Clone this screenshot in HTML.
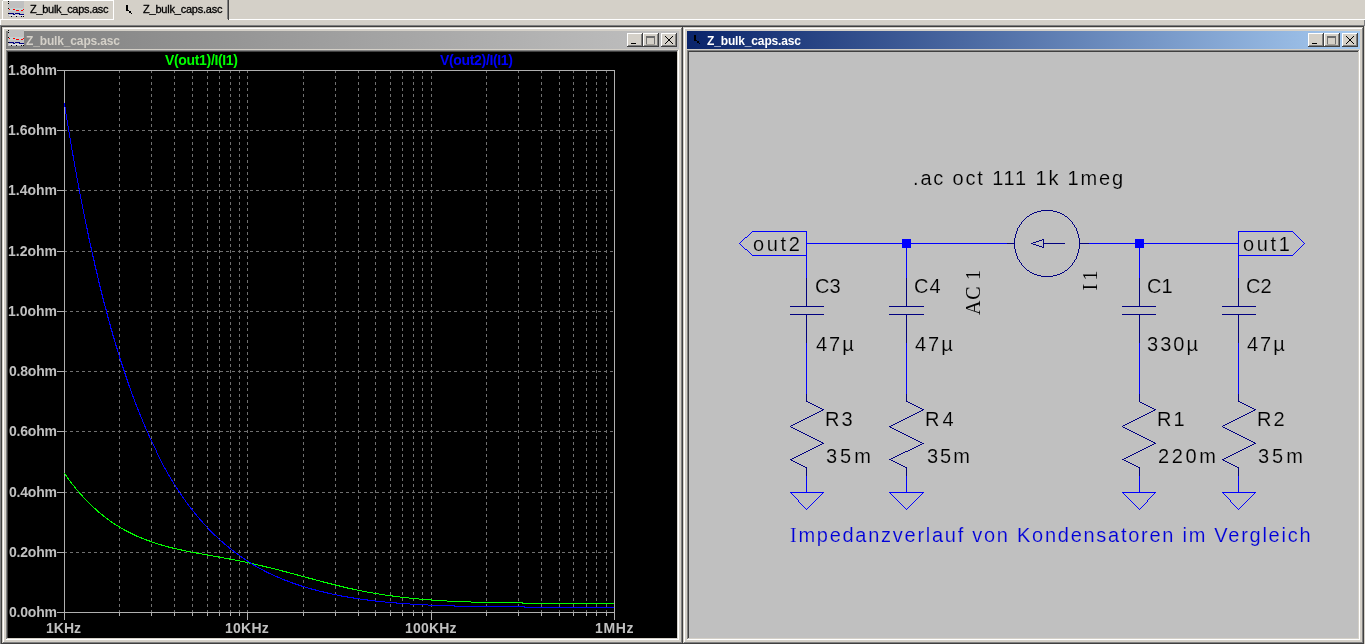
<!DOCTYPE html>
<html><head><meta charset="utf-8"><style>html,body{margin:0;padding:0;overflow:hidden;background:#d4d0c8}svg{display:block}</style></head>
<body><svg style="will-change:transform" width="1365" height="644" viewBox="0 0 1365 644" shape-rendering="crispEdges">
<rect x="0" y="0" width="1365" height="644" fill="#d4d0c8"/>
<rect x="3" y="0" width="111" height="1" fill="#ffffff"/>
<rect x="2" y="1" width="1" height="19" fill="#ffffff"/>
<rect x="113" y="0" width="1" height="20" fill="#ffffff"/>
<rect x="0" y="19" width="114" height="1" fill="#ffffff"/>
<rect x="0" y="19" width="1" height="6" fill="#ffffff"/>
<rect x="227" y="0" width="1" height="19" fill="#808080"/>
<rect x="228" y="0" width="1" height="20" fill="#404040"/>
<rect x="229" y="19" width="1136" height="1" fill="#ffffff"/>
<rect x="1364" y="20" width="1" height="5" fill="#808080"/>
<rect x="0" y="25" width="1365" height="1" fill="#808080"/>
<rect x="1" y="26" width="1363" height="1" fill="#404040"/>
<rect x="0" y="25" width="1" height="619" fill="#808080"/>
<rect x="1" y="26" width="1" height="618" fill="#404040"/>
<rect x="8" y="1" width="16" height="16" fill="#c0c0c0"/>
<rect x="9" y="8" width="15" height="3" fill="#c4d0d0"/>
<rect x="9" y="15" width="15" height="1" fill="#e4e4e4"/>
<rect x="8" y="1" width="1" height="1" fill="#000"/>
<rect x="8" y="3" width="1" height="1" fill="#000"/>
<rect x="8" y="8" width="1" height="1" fill="#000"/>
<rect x="8" y="13" width="1" height="1" fill="#000"/>
<rect x="11" y="16" width="1" height="1" fill="#000"/>
<rect x="16" y="16" width="1" height="1" fill="#000"/>
<rect x="21" y="16" width="1" height="1" fill="#000"/>
<rect x="23" y="16" width="1" height="1" fill="#000"/>
<rect x="9" y="9" width="1" height="1" fill="#ff0000"/>
<rect x="13" y="9" width="2" height="1" fill="#ff0000"/>
<rect x="23" y="9" width="1" height="1" fill="#ff0000"/>
<rect x="16" y="10" width="3" height="1" fill="#ff0000"/>
<rect x="21" y="10" width="2" height="1" fill="#ff0000"/>
<rect x="9" y="13" width="5" height="1" fill="#000080"/>
<rect x="15" y="13" width="5" height="1" fill="#000080"/>
<rect x="13" y="14" width="2" height="1" fill="#000080"/>
<rect x="19" y="14" width="5" height="1" fill="#000080"/>
<text x="30" y="13" font-family="Liberation Sans" font-size="11" fill="#000" font-weight="normal" textLength="78.55" lengthAdjust="spacing" stroke="#000" stroke-width="0.3">Z_bulk_caps.asc</text>
<rect x="126" y="5" width="2" height="6" fill="#000"/>
<rect x="128" y="10" width="1" height="1" fill="#000"/>
<rect x="129" y="11" width="2" height="2" fill="#000"/>
<rect x="131" y="13" width="1" height="1" fill="#000"/>
<text x="143" y="13" font-family="Liberation Sans" font-size="11" fill="#000" font-weight="normal" textLength="79.55" lengthAdjust="spacing" stroke="#000" stroke-width="0.3">Z_bulk_caps.asc</text>
<rect x="2" y="27" width="680" height="1" fill="#d4d0c8"/>
<rect x="2" y="27" width="1" height="617" fill="#d4d0c8"/>
<rect x="3" y="28" width="678" height="1" fill="#ffffff"/>
<rect x="3" y="28" width="1" height="616" fill="#ffffff"/>
<rect x="682" y="27" width="1" height="617" fill="#404040"/>
<rect x="681" y="28" width="1" height="616" fill="#808080"/>
<rect x="2" y="643" width="681" height="1" fill="#404040"/>
<rect x="3" y="642" width="679" height="1" fill="#808080"/>
<rect x="683" y="27" width="680" height="1" fill="#d4d0c8"/>
<rect x="683" y="27" width="1" height="617" fill="#d4d0c8"/>
<rect x="684" y="28" width="678" height="1" fill="#ffffff"/>
<rect x="684" y="28" width="1" height="616" fill="#ffffff"/>
<rect x="1363" y="27" width="1" height="617" fill="#404040"/>
<rect x="1362" y="28" width="1" height="616" fill="#808080"/>
<rect x="683" y="643" width="681" height="1" fill="#404040"/>
<rect x="684" y="642" width="679" height="1" fill="#808080"/>
<defs><linearGradient id="g1" x1="0" x2="1" y1="0" y2="0"><stop offset="0" stop-color="#808080"/><stop offset="1" stop-color="#c0c0c0"/></linearGradient><linearGradient id="g2" x1="0" x2="1" y1="0" y2="0"><stop offset="0" stop-color="#0a246a"/><stop offset="1" stop-color="#a6caf0"/></linearGradient></defs>
<rect x="6" y="31" width="673" height="18" fill="url(#g1)"/>
<rect x="687" y="31" width="673" height="18" fill="url(#g2)"/>
<rect x="8" y="30" width="16" height="16" fill="#c0c0c0"/>
<rect x="9" y="37" width="15" height="3" fill="#c4d0d0"/>
<rect x="9" y="44" width="15" height="1" fill="#e4e4e4"/>
<rect x="8" y="30" width="1" height="1" fill="#000"/>
<rect x="8" y="32" width="1" height="1" fill="#000"/>
<rect x="8" y="37" width="1" height="1" fill="#000"/>
<rect x="8" y="42" width="1" height="1" fill="#000"/>
<rect x="11" y="45" width="1" height="1" fill="#000"/>
<rect x="16" y="45" width="1" height="1" fill="#000"/>
<rect x="21" y="45" width="1" height="1" fill="#000"/>
<rect x="23" y="45" width="1" height="1" fill="#000"/>
<rect x="9" y="38" width="1" height="1" fill="#ff0000"/>
<rect x="13" y="38" width="2" height="1" fill="#ff0000"/>
<rect x="23" y="38" width="1" height="1" fill="#ff0000"/>
<rect x="16" y="39" width="3" height="1" fill="#ff0000"/>
<rect x="21" y="39" width="2" height="1" fill="#ff0000"/>
<rect x="9" y="42" width="5" height="1" fill="#000080"/>
<rect x="15" y="42" width="5" height="1" fill="#000080"/>
<rect x="13" y="43" width="2" height="1" fill="#000080"/>
<rect x="19" y="43" width="5" height="1" fill="#000080"/>
<text x="26" y="45" font-family="Liberation Sans" font-size="12" fill="#d4d0c8" font-weight="bold" textLength="94.06" lengthAdjust="spacing">Z_bulk_caps.asc</text>
<rect x="694" y="35" width="2" height="6" fill="#000"/>
<rect x="696" y="40" width="1" height="1" fill="#000"/>
<rect x="697" y="41" width="2" height="2" fill="#000"/>
<rect x="699" y="43" width="1" height="1" fill="#000"/>
<text x="707" y="45" font-family="Liberation Sans" font-size="12" fill="#ffffff" font-weight="bold" textLength="94.06" lengthAdjust="spacing">Z_bulk_caps.asc</text>
<rect x="627" y="33" width="16" height="14" fill="#404040"/>
<rect x="627" y="33" width="15" height="13" fill="#ffffff"/>
<rect x="628" y="34" width="14" height="12" fill="#808080"/>
<rect x="628" y="34" width="13" height="11" fill="#d4d0c8"/>
<rect x="631" y="43" width="5" height="1" fill="#000"/>
<rect x="643" y="33" width="16" height="14" fill="#404040"/>
<rect x="643" y="33" width="15" height="13" fill="#ffffff"/>
<rect x="644" y="34" width="14" height="12" fill="#808080"/>
<rect x="644" y="34" width="13" height="11" fill="#d4d0c8"/>
<rect x="646" y="36" width="9" height="2" fill="#6c6c6c"/>
<rect x="646" y="38" width="1" height="6" fill="#707070"/>
<rect x="654" y="38" width="1" height="6" fill="#707070"/>
<rect x="646" y="44" width="9" height="1" fill="#a8a49c"/>
<rect x="661" y="33" width="16" height="14" fill="#404040"/>
<rect x="661" y="33" width="15" height="13" fill="#ffffff"/>
<rect x="662" y="34" width="14" height="12" fill="#808080"/>
<rect x="662" y="34" width="13" height="11" fill="#d4d0c8"/>
<rect x="665" y="36" width="1" height="1" fill="#000"/>
<rect x="672" y="36" width="1" height="1" fill="#000"/>
<rect x="666" y="37" width="1" height="1" fill="#000"/>
<rect x="671" y="37" width="1" height="1" fill="#000"/>
<rect x="667" y="38" width="1" height="1" fill="#000"/>
<rect x="670" y="38" width="1" height="1" fill="#000"/>
<rect x="668" y="39" width="1" height="1" fill="#000"/>
<rect x="669" y="39" width="1" height="1" fill="#000"/>
<rect x="669" y="40" width="1" height="1" fill="#000"/>
<rect x="668" y="40" width="1" height="1" fill="#000"/>
<rect x="670" y="41" width="1" height="1" fill="#000"/>
<rect x="667" y="41" width="1" height="1" fill="#000"/>
<rect x="671" y="42" width="1" height="1" fill="#000"/>
<rect x="666" y="42" width="1" height="1" fill="#000"/>
<rect x="672" y="43" width="1" height="1" fill="#000"/>
<rect x="665" y="43" width="1" height="1" fill="#000"/>
<rect x="1308" y="33" width="16" height="14" fill="#404040"/>
<rect x="1308" y="33" width="15" height="13" fill="#ffffff"/>
<rect x="1309" y="34" width="14" height="12" fill="#808080"/>
<rect x="1309" y="34" width="13" height="11" fill="#d4d0c8"/>
<rect x="1312" y="43" width="5" height="1" fill="#000"/>
<rect x="1324" y="33" width="16" height="14" fill="#404040"/>
<rect x="1324" y="33" width="15" height="13" fill="#ffffff"/>
<rect x="1325" y="34" width="14" height="12" fill="#808080"/>
<rect x="1325" y="34" width="13" height="11" fill="#d4d0c8"/>
<rect x="1327" y="36" width="9" height="2" fill="#6c6c6c"/>
<rect x="1327" y="38" width="1" height="6" fill="#707070"/>
<rect x="1335" y="38" width="1" height="6" fill="#707070"/>
<rect x="1327" y="44" width="9" height="1" fill="#a8a49c"/>
<rect x="1342" y="33" width="16" height="14" fill="#404040"/>
<rect x="1342" y="33" width="15" height="13" fill="#ffffff"/>
<rect x="1343" y="34" width="14" height="12" fill="#808080"/>
<rect x="1343" y="34" width="13" height="11" fill="#d4d0c8"/>
<rect x="1346" y="36" width="1" height="1" fill="#000"/>
<rect x="1353" y="36" width="1" height="1" fill="#000"/>
<rect x="1347" y="37" width="1" height="1" fill="#000"/>
<rect x="1352" y="37" width="1" height="1" fill="#000"/>
<rect x="1348" y="38" width="1" height="1" fill="#000"/>
<rect x="1351" y="38" width="1" height="1" fill="#000"/>
<rect x="1349" y="39" width="1" height="1" fill="#000"/>
<rect x="1350" y="39" width="1" height="1" fill="#000"/>
<rect x="1350" y="40" width="1" height="1" fill="#000"/>
<rect x="1349" y="40" width="1" height="1" fill="#000"/>
<rect x="1351" y="41" width="1" height="1" fill="#000"/>
<rect x="1348" y="41" width="1" height="1" fill="#000"/>
<rect x="1352" y="42" width="1" height="1" fill="#000"/>
<rect x="1347" y="42" width="1" height="1" fill="#000"/>
<rect x="1353" y="43" width="1" height="1" fill="#000"/>
<rect x="1346" y="43" width="1" height="1" fill="#000"/>
<rect x="6" y="50" width="673" height="1" fill="#808080"/>
<rect x="6" y="50" width="1" height="590" fill="#808080"/>
<rect x="7" y="51" width="671" height="1" fill="#404040"/>
<rect x="7" y="51" width="1" height="588" fill="#404040"/>
<rect x="678" y="50" width="1" height="590" fill="#ffffff"/>
<rect x="6" y="639" width="673" height="1" fill="#ffffff"/>
<rect x="677" y="51" width="1" height="588" fill="#d4d0c8"/>
<rect x="7" y="638" width="671" height="1" fill="#d4d0c8"/>
<rect x="8" y="52" width="669" height="586" fill="#000000"/>
<rect x="687" y="50" width="673" height="1" fill="#808080"/>
<rect x="687" y="50" width="1" height="590" fill="#808080"/>
<rect x="688" y="51" width="671" height="1" fill="#404040"/>
<rect x="688" y="51" width="1" height="588" fill="#404040"/>
<rect x="1359" y="50" width="1" height="590" fill="#ffffff"/>
<rect x="687" y="639" width="673" height="1" fill="#ffffff"/>
<rect x="1358" y="51" width="1" height="588" fill="#d4d0c8"/>
<rect x="688" y="638" width="671" height="1" fill="#d4d0c8"/>
<rect x="689" y="52" width="669" height="586" fill="#c0c0c0"/>
<path d="M119.5 70V612M151.5 70V612M174.5 70V612M192.5 70V612M207.5 70V612M219.5 70V612M230.5 70V612M239.5 70V612M247.5 70V612M303.5 70V612M335.5 70V612M358.5 70V612M375.5 70V612M390.5 70V612M402.5 70V612M413.5 70V612M422.5 70V612M431.5 70V612M486.5 70V612M518.5 70V612M541.5 70V612M559.5 70V612M573.5 70V612M586.5 70V612M596.5 70V612M606.5 70V612" stroke="#707070" stroke-width="1" stroke-dasharray="3 3" fill="none" shape-rendering="crispEdges"/>
<path d="M64 552.5H614M64 492.5H614M64 431.5H614M64 371.5H614M64 311.5H614M64 251.5H614M64 190.5H614M64 130.5H614" stroke="#707070" stroke-width="1" stroke-dasharray="3 3" fill="none" shape-rendering="crispEdges"/>
<rect x="57" y="70" width="558" height="1" fill="#b0b0b0"/>
<rect x="64" y="70" width="1" height="550" fill="#b0b0b0"/>
<rect x="64" y="612" width="551" height="1" fill="#b0b0b0"/>
<rect x="614" y="70" width="1" height="550" fill="#b0b0b0"/>
<rect x="57" y="612" width="8" height="1" fill="#b0b0b0"/>
<rect x="57" y="552" width="8" height="1" fill="#b0b0b0"/>
<rect x="57" y="492" width="8" height="1" fill="#b0b0b0"/>
<rect x="57" y="431" width="8" height="1" fill="#b0b0b0"/>
<rect x="57" y="371" width="8" height="1" fill="#b0b0b0"/>
<rect x="57" y="311" width="8" height="1" fill="#b0b0b0"/>
<rect x="57" y="251" width="8" height="1" fill="#b0b0b0"/>
<rect x="57" y="190" width="8" height="1" fill="#b0b0b0"/>
<rect x="57" y="130" width="8" height="1" fill="#b0b0b0"/>
<rect x="57" y="70" width="8" height="1" fill="#b0b0b0"/>
<rect x="119" y="612" width="1" height="4" fill="#b0b0b0"/>
<rect x="151" y="612" width="1" height="4" fill="#b0b0b0"/>
<rect x="174" y="612" width="1" height="4" fill="#b0b0b0"/>
<rect x="192" y="612" width="1" height="4" fill="#b0b0b0"/>
<rect x="207" y="612" width="1" height="4" fill="#b0b0b0"/>
<rect x="219" y="612" width="1" height="4" fill="#b0b0b0"/>
<rect x="230" y="612" width="1" height="4" fill="#b0b0b0"/>
<rect x="239" y="612" width="1" height="4" fill="#b0b0b0"/>
<rect x="247" y="612" width="1" height="4" fill="#b0b0b0"/>
<rect x="303" y="612" width="1" height="4" fill="#b0b0b0"/>
<rect x="335" y="612" width="1" height="4" fill="#b0b0b0"/>
<rect x="358" y="612" width="1" height="4" fill="#b0b0b0"/>
<rect x="375" y="612" width="1" height="4" fill="#b0b0b0"/>
<rect x="390" y="612" width="1" height="4" fill="#b0b0b0"/>
<rect x="402" y="612" width="1" height="4" fill="#b0b0b0"/>
<rect x="413" y="612" width="1" height="4" fill="#b0b0b0"/>
<rect x="422" y="612" width="1" height="4" fill="#b0b0b0"/>
<rect x="431" y="612" width="1" height="4" fill="#b0b0b0"/>
<rect x="486" y="612" width="1" height="4" fill="#b0b0b0"/>
<rect x="518" y="612" width="1" height="4" fill="#b0b0b0"/>
<rect x="541" y="612" width="1" height="4" fill="#b0b0b0"/>
<rect x="559" y="612" width="1" height="4" fill="#b0b0b0"/>
<rect x="573" y="612" width="1" height="4" fill="#b0b0b0"/>
<rect x="586" y="612" width="1" height="4" fill="#b0b0b0"/>
<rect x="596" y="612" width="1" height="4" fill="#b0b0b0"/>
<rect x="606" y="612" width="1" height="4" fill="#b0b0b0"/>
<rect x="614" y="612" width="1" height="4" fill="#b0b0b0"/>
<rect x="64" y="612" width="1" height="8" fill="#b0b0b0"/>
<rect x="247" y="612" width="1" height="8" fill="#b0b0b0"/>
<rect x="431" y="612" width="1" height="8" fill="#b0b0b0"/>
<rect x="614" y="612" width="1" height="8" fill="#b0b0b0"/>
<text x="9" y="617" font-family="Liberation Sans" font-size="14" fill="#c0c0c0" font-weight="bold" textLength="48.02" lengthAdjust="spacing">0.0ohm</text>
<text x="9" y="557" font-family="Liberation Sans" font-size="14" fill="#c0c0c0" font-weight="bold" textLength="48.02" lengthAdjust="spacing">0.2ohm</text>
<text x="9" y="497" font-family="Liberation Sans" font-size="14" fill="#c0c0c0" font-weight="bold" textLength="48.02" lengthAdjust="spacing">0.4ohm</text>
<text x="9" y="436" font-family="Liberation Sans" font-size="14" fill="#c0c0c0" font-weight="bold" textLength="48.02" lengthAdjust="spacing">0.6ohm</text>
<text x="9" y="376" font-family="Liberation Sans" font-size="14" fill="#c0c0c0" font-weight="bold" textLength="48.02" lengthAdjust="spacing">0.8ohm</text>
<text x="8" y="316" font-family="Liberation Sans" font-size="14" fill="#c0c0c0" font-weight="bold" textLength="49.02" lengthAdjust="spacing">1.0ohm</text>
<text x="8" y="256" font-family="Liberation Sans" font-size="14" fill="#c0c0c0" font-weight="bold" textLength="49.02" lengthAdjust="spacing">1.2ohm</text>
<text x="8" y="195" font-family="Liberation Sans" font-size="14" fill="#c0c0c0" font-weight="bold" textLength="49.02" lengthAdjust="spacing">1.4ohm</text>
<text x="8" y="135" font-family="Liberation Sans" font-size="14" fill="#c0c0c0" font-weight="bold" textLength="49.02" lengthAdjust="spacing">1.6ohm</text>
<text x="8" y="75" font-family="Liberation Sans" font-size="14" fill="#c0c0c0" font-weight="bold" textLength="49.02" lengthAdjust="spacing">1.8ohm</text>
<text x="46" y="633" font-family="Liberation Sans" font-size="14" fill="#c0c0c0" font-weight="bold" textLength="35.02" lengthAdjust="spacing">1KHz</text>
<text x="225" y="633" font-family="Liberation Sans" font-size="14" fill="#c0c0c0" font-weight="bold" textLength="43.8" lengthAdjust="spacing">10KHz</text>
<text x="405" y="633" font-family="Liberation Sans" font-size="14" fill="#c0c0c0" font-weight="bold" textLength="51.59" lengthAdjust="spacing">100KHz</text>
<text x="595" y="633" font-family="Liberation Sans" font-size="14" fill="#c0c0c0" font-weight="bold" textLength="38.56" lengthAdjust="spacing">1MHz</text>
<text x="165" y="65" font-family="Liberation Sans" font-size="14" fill="#00ff00" font-weight="bold" textLength="73.0" lengthAdjust="spacing">V(out1)/I(I1)</text>
<text x="440" y="65" font-family="Liberation Sans" font-size="14" fill="#0000ff" font-weight="bold" textLength="73.0" lengthAdjust="spacing">V(out2)/I(I1)</text>
<clipPath id="pc"><rect x="64" y="52" width="550" height="586"/></clipPath><g clip-path="url(#pc)">
<polyline points="64.5,473.5 65.5,474.5 65.5,475.5 66.5,475.5 66.5,476.5 67.5,477.5 67.5,478.5 68.5,478.5 68.5,479.5 69.5,480.5 70.5,481.5 70.5,482.5 71.5,482.5 71.5,483.5 72.5,484.5 73.5,485.5 74.5,486.5 74.5,487.5 75.5,487.5 75.5,488.5 76.5,489.5 77.5,490.5 78.5,491.5 79.5,492.5 79.5,493.5 80.5,493.5 80.5,494.5 81.5,494.5 81.5,495.5 82.5,495.5 82.5,496.5 83.5,497.5 84.5,498.5 85.5,499.5 86.5,500.5 87.5,501.5 88.5,502.5 89.5,503.5 90.5,504.5 91.5,505.5 92.5,506.5 93.5,507.5 94.5,508.5 95.5,508.5 95.5,509.5 96.5,509.5 96.5,510.5 97.5,510.5 97.5,511.5 98.5,511.5 98.5,512.5 99.5,512.5 100.5,513.5 101.5,514.5 102.5,514.5 102.5,515.5 103.5,515.5 103.5,516.5 104.5,516.5 105.5,517.5 106.5,518.5 107.5,518.5 107.5,519.5 108.5,519.5 109.5,520.5 110.5,521.5 111.5,521.5 111.5,522.5 112.5,522.5 113.5,523.5 114.5,523.5 114.5,524.5 115.5,524.5 116.5,525.5 117.5,525.5 118.5,526.5 119.5,526.5 119.5,527.5 120.5,527.5 121.5,528.5 122.5,528.5 123.5,529.5 124.5,529.5 124.5,530.5 125.5,530.5 126.5,530.5 126.5,531.5 127.5,531.5 128.5,531.5 128.5,532.5 129.5,532.5 130.5,532.5 130.5,533.5 131.5,533.5 132.5,533.5 132.5,534.5 133.5,534.5 134.5,534.5 134.5,535.5 135.5,535.5 136.5,535.5 136.5,536.5 137.5,536.5 138.5,536.5 139.5,537.5 140.5,537.5 141.5,537.5 141.5,538.5 142.5,538.5 143.5,538.5 144.5,539.5 145.5,539.5 146.5,539.5 146.5,540.5 147.5,540.5 148.5,540.5 149.5,540.5 149.5,541.5 150.5,541.5 151.5,541.5 152.5,542.5 153.5,542.5 154.5,542.5 155.5,543.5 156.5,543.5 157.5,543.5 158.5,544.5 159.5,544.5 160.5,544.5 161.5,544.5 161.5,545.5 162.5,545.5 163.5,545.5 164.5,545.5 165.5,546.5 166.5,546.5 167.5,546.5 168.5,546.5 168.5,547.5 169.5,547.5 170.5,547.5 171.5,547.5 172.5,547.5 172.5,548.5 173.5,548.5 174.5,548.5 175.5,548.5 176.5,548.5 177.5,549.5 178.5,549.5 179.5,549.5 180.5,549.5 181.5,549.5 181.5,550.5 182.5,550.5 183.5,550.5 184.5,550.5 185.5,550.5 186.5,551.5 187.5,551.5 188.5,551.5 189.5,551.5 190.5,551.5 191.5,552.5 192.5,552.5 193.5,552.5 194.5,552.5 195.5,552.5 196.5,552.5 196.5,553.5 197.5,553.5 198.5,553.5 199.5,553.5 200.5,553.5 201.5,553.5 202.5,554.5 203.5,554.5 204.5,554.5 205.5,554.5 206.5,554.5 207.5,554.5 207.5,555.5 208.5,555.5 209.5,555.5 210.5,555.5 211.5,555.5 212.5,555.5 213.5,556.5 214.5,556.5 215.5,556.5 216.5,556.5 217.5,556.5 218.5,556.5 218.5,557.5 219.5,557.5 220.5,557.5 221.5,557.5 222.5,557.5 223.5,557.5 224.5,558.5 225.5,558.5 226.5,558.5 227.5,558.5 228.5,558.5 229.5,558.5 229.5,559.5 230.5,559.5 231.5,559.5 232.5,559.5 233.5,559.5 234.5,559.5 235.5,560.5 236.5,560.5 237.5,560.5 238.5,560.5 239.5,560.5 240.5,561.5 241.5,561.5 242.5,561.5 243.5,561.5 244.5,561.5 245.5,562.5 246.5,562.5 247.5,562.5 248.5,562.5 249.5,563.5 250.5,563.5 251.5,563.5 252.5,563.5 253.5,563.5 253.5,564.5 254.5,564.5 255.5,564.5 256.5,564.5 257.5,564.5 258.5,565.5 259.5,565.5 260.5,565.5 261.5,565.5 262.5,565.5 262.5,566.5 263.5,566.5 264.5,566.5 265.5,566.5 266.5,566.5 266.5,567.5 267.5,567.5 268.5,567.5 269.5,567.5 270.5,567.5 271.5,568.5 272.5,568.5 273.5,568.5 274.5,568.5 275.5,569.5 276.5,569.5 277.5,569.5 278.5,569.5 279.5,570.5 280.5,570.5 281.5,570.5 282.5,570.5 282.5,571.5 283.5,571.5 284.5,571.5 285.5,571.5 286.5,571.5 286.5,572.5 287.5,572.5 288.5,572.5 289.5,572.5 290.5,573.5 291.5,573.5 292.5,573.5 293.5,573.5 294.5,574.5 295.5,574.5 296.5,574.5 297.5,574.5 297.5,575.5 298.5,575.5 299.5,575.5 300.5,575.5 301.5,576.5 302.5,576.5 303.5,576.5 304.5,576.5 305.5,577.5 306.5,577.5 307.5,577.5 308.5,577.5 308.5,578.5 309.5,578.5 310.5,578.5 311.5,578.5 312.5,578.5 312.5,579.5 313.5,579.5 314.5,579.5 315.5,579.5 316.5,580.5 317.5,580.5 318.5,580.5 319.5,580.5 320.5,581.5 321.5,581.5 322.5,581.5 323.5,581.5 323.5,582.5 324.5,582.5 325.5,582.5 326.5,582.5 327.5,582.5 327.5,583.5 328.5,583.5 329.5,583.5 330.5,583.5 331.5,583.5 331.5,584.5 332.5,584.5 333.5,584.5 334.5,584.5 335.5,584.5 335.5,585.5 336.5,585.5 337.5,585.5 338.5,585.5 339.5,585.5 339.5,586.5 340.5,586.5 341.5,586.5 342.5,586.5 343.5,586.5 343.5,587.5 344.5,587.5 345.5,587.5 346.5,587.5 347.5,587.5 347.5,588.5 348.5,588.5 349.5,588.5 350.5,588.5 351.5,588.5 352.5,588.5 352.5,589.5 353.5,589.5 354.5,589.5 355.5,589.5 356.5,589.5 357.5,590.5 358.5,590.5 359.5,590.5 360.5,590.5 361.5,590.5 362.5,591.5 363.5,591.5 364.5,591.5 365.5,591.5 366.5,591.5 367.5,592.5 368.5,592.5 369.5,592.5 370.5,592.5 371.5,592.5 372.5,592.5 373.5,593.5 374.5,593.5 375.5,593.5 376.5,593.5 377.5,593.5 378.5,593.5 379.5,594.5 380.5,594.5 381.5,594.5 382.5,594.5 383.5,594.5 384.5,594.5 385.5,595.5 386.5,595.5 387.5,595.5 388.5,595.5 389.5,595.5 390.5,595.5 391.5,595.5 392.5,595.5 392.5,596.5 393.5,596.5 394.5,596.5 395.5,596.5 396.5,596.5 397.5,596.5 398.5,596.5 399.5,596.5 400.5,597.5 401.5,597.5 402.5,597.5 403.5,597.5 404.5,597.5 405.5,597.5 406.5,597.5 407.5,597.5 408.5,597.5 409.5,598.5 410.5,598.5 411.5,598.5 412.5,598.5 413.5,598.5 414.5,598.5 415.5,598.5 416.5,598.5 417.5,598.5 418.5,598.5 419.5,599.5 420.5,599.5 421.5,599.5 422.5,599.5 423.5,599.5 424.5,599.5 425.5,599.5 426.5,599.5 427.5,599.5 428.5,599.5 429.5,599.5 430.5,599.5 431.5,599.5 431.5,600.5 432.5,600.5 433.5,600.5 434.5,600.5 435.5,600.5 436.5,600.5 437.5,600.5 438.5,600.5 439.5,600.5 440.5,600.5 441.5,600.5 442.5,600.5 443.5,600.5 444.5,600.5 445.5,600.5 446.5,600.5 447.5,601.5 448.5,601.5 449.5,601.5 450.5,601.5 451.5,601.5 452.5,601.5 453.5,601.5 454.5,601.5 455.5,601.5 456.5,601.5 457.5,601.5 458.5,601.5 459.5,601.5 460.5,601.5 461.5,601.5 462.5,601.5 463.5,601.5 464.5,601.5 465.5,601.5 466.5,601.5 467.5,601.5 468.5,601.5 469.5,601.5 470.5,601.5 471.5,602.5 472.5,602.5 473.5,602.5 474.5,602.5 475.5,602.5 476.5,602.5 477.5,602.5 478.5,602.5 479.5,602.5 480.5,602.5 481.5,602.5 482.5,602.5 483.5,602.5 484.5,602.5 485.5,602.5 486.5,602.5 487.5,602.5 488.5,602.5 489.5,602.5 490.5,602.5 491.5,602.5 492.5,602.5 493.5,602.5 494.5,602.5 495.5,602.5 496.5,602.5 497.5,602.5 498.5,602.5 499.5,602.5 500.5,602.5 501.5,602.5 502.5,602.5 503.5,602.5 504.5,602.5 505.5,602.5 506.5,602.5 507.5,602.5 508.5,602.5 509.5,602.5 510.5,602.5 511.5,602.5 512.5,602.5 513.5,602.5 514.5,602.5 515.5,602.5 516.5,602.5 517.5,602.5 518.5,602.5 519.5,602.5 520.5,602.5 521.5,602.5 522.5,602.5 522.5,603.5 523.5,603.5 524.5,603.5 525.5,603.5 526.5,603.5 527.5,603.5 528.5,603.5 529.5,603.5 530.5,603.5 531.5,603.5 532.5,603.5 533.5,603.5 534.5,603.5 535.5,603.5 536.5,603.5 537.5,603.5 538.5,603.5 539.5,603.5 540.5,603.5 541.5,603.5 542.5,603.5 543.5,603.5 544.5,603.5 545.5,603.5 546.5,603.5 547.5,603.5 548.5,603.5 549.5,603.5 550.5,603.5 551.5,603.5 552.5,603.5 553.5,603.5 554.5,603.5 555.5,603.5 556.5,603.5 557.5,603.5 558.5,603.5 559.5,603.5 560.5,603.5 561.5,603.5 562.5,603.5 563.5,603.5 564.5,603.5 565.5,603.5 566.5,603.5 567.5,603.5 568.5,603.5 569.5,603.5 570.5,603.5 571.5,603.5 572.5,603.5 573.5,603.5 574.5,603.5 575.5,603.5 576.5,603.5 577.5,603.5 578.5,603.5 579.5,603.5 580.5,603.5 581.5,603.5 582.5,603.5 583.5,603.5 584.5,603.5 585.5,603.5 586.5,603.5 587.5,603.5 588.5,603.5 589.5,603.5 590.5,603.5 591.5,603.5 592.5,603.5 593.5,603.5 594.5,603.5 595.5,603.5 596.5,603.5 597.5,603.5 598.5,603.5 599.5,603.5 600.5,603.5 601.5,603.5 602.5,603.5 603.5,603.5 604.5,603.5 605.5,603.5 606.5,603.5 607.5,603.5 608.5,603.5 609.5,603.5 610.5,603.5 611.5,603.5 612.5,603.5 613.5,603.5 614.5,603.5" stroke="#00ff00" stroke-width="1" fill="none" shape-rendering="crispEdges"/>
<polyline points="64.5,102.5 64.5,105.5 65.5,108.5 65.5,112.5 66.5,115.5 66.5,118.5 67.5,121.5 67.5,124.5 68.5,127.5 68.5,130.5 69.5,133.5 69.5,136.5 70.5,139.5 70.5,142.5 71.5,145.5 71.5,148.5 72.5,151.5 72.5,154.5 73.5,156.5 73.5,159.5 74.5,162.5 74.5,165.5 75.5,168.5 75.5,170.5 76.5,173.5 76.5,176.5 77.5,179.5 77.5,181.5 78.5,184.5 78.5,187.5 79.5,189.5 79.5,192.5 80.5,195.5 80.5,197.5 81.5,200.5 81.5,202.5 82.5,205.5 82.5,207.5 83.5,210.5 83.5,212.5 84.5,215.5 84.5,217.5 85.5,220.5 85.5,222.5 86.5,225.5 86.5,227.5 87.5,229.5 87.5,232.5 88.5,234.5 88.5,237.5 89.5,239.5 89.5,241.5 90.5,244.5 90.5,246.5 91.5,248.5 91.5,250.5 92.5,253.5 92.5,255.5 93.5,257.5 93.5,259.5 94.5,261.5 94.5,264.5 95.5,266.5 95.5,268.5 96.5,270.5 96.5,272.5 97.5,274.5 97.5,276.5 98.5,279.5 98.5,281.5 99.5,283.5 99.5,285.5 100.5,287.5 100.5,289.5 101.5,291.5 101.5,293.5 102.5,295.5 102.5,297.5 103.5,299.5 103.5,301.5 104.5,303.5 104.5,305.5 105.5,306.5 105.5,308.5 106.5,310.5 106.5,312.5 107.5,314.5 107.5,316.5 108.5,318.5 108.5,320.5 109.5,321.5 109.5,323.5 110.5,325.5 110.5,327.5 111.5,329.5 111.5,330.5 112.5,332.5 112.5,334.5 113.5,336.5 113.5,337.5 114.5,339.5 114.5,341.5 115.5,342.5 115.5,344.5 116.5,346.5 116.5,347.5 117.5,349.5 117.5,351.5 118.5,352.5 118.5,354.5 119.5,355.5 119.5,357.5 120.5,359.5 120.5,360.5 121.5,362.5 121.5,363.5 122.5,365.5 122.5,366.5 123.5,368.5 123.5,369.5 124.5,371.5 124.5,372.5 125.5,374.5 125.5,375.5 126.5,377.5 126.5,378.5 127.5,380.5 127.5,381.5 128.5,383.5 128.5,384.5 129.5,386.5 129.5,387.5 130.5,388.5 130.5,390.5 131.5,391.5 131.5,393.5 132.5,394.5 132.5,395.5 133.5,397.5 133.5,398.5 134.5,399.5 134.5,401.5 135.5,402.5 135.5,403.5 136.5,405.5 136.5,406.5 137.5,407.5 137.5,408.5 138.5,410.5 138.5,411.5 139.5,412.5 139.5,413.5 140.5,415.5 140.5,416.5 141.5,417.5 141.5,418.5 142.5,419.5 142.5,421.5 143.5,422.5 143.5,423.5 144.5,424.5 144.5,425.5 145.5,427.5 145.5,428.5 146.5,429.5 146.5,430.5 147.5,431.5 147.5,432.5 148.5,433.5 148.5,434.5 149.5,436.5 149.5,437.5 150.5,438.5 150.5,439.5 151.5,440.5 151.5,441.5 152.5,442.5 152.5,443.5 153.5,444.5 153.5,445.5 154.5,446.5 154.5,447.5 155.5,448.5 155.5,449.5 156.5,450.5 156.5,451.5 156.5,452.5 157.5,453.5 157.5,454.5 158.5,455.5 158.5,456.5 159.5,457.5 159.5,458.5 160.5,459.5 160.5,460.5 161.5,461.5 161.5,462.5 162.5,463.5 162.5,464.5 163.5,465.5 163.5,466.5 164.5,467.5 164.5,468.5 165.5,468.5 165.5,469.5 166.5,470.5 166.5,471.5 167.5,472.5 167.5,473.5 168.5,474.5 168.5,475.5 169.5,475.5 169.5,476.5 170.5,477.5 170.5,478.5 171.5,479.5 171.5,480.5 172.5,480.5 172.5,481.5 173.5,482.5 173.5,483.5 174.5,484.5 175.5,485.5 175.5,486.5 176.5,487.5 176.5,488.5 177.5,488.5 177.5,489.5 178.5,490.5 178.5,491.5 179.5,491.5 179.5,492.5 180.5,493.5 180.5,494.5 181.5,494.5 181.5,495.5 182.5,496.5 182.5,497.5 183.5,497.5 183.5,498.5 184.5,499.5 185.5,500.5 185.5,501.5 186.5,502.5 187.5,503.5 187.5,504.5 188.5,504.5 188.5,505.5 189.5,506.5 190.5,507.5 190.5,508.5 191.5,508.5 191.5,509.5 192.5,509.5 192.5,510.5 193.5,511.5 194.5,512.5 194.5,513.5 195.5,513.5 195.5,514.5 196.5,514.5 196.5,515.5 197.5,516.5 198.5,517.5 199.5,518.5 199.5,519.5 200.5,519.5 200.5,520.5 201.5,520.5 201.5,521.5 202.5,521.5 202.5,522.5 203.5,523.5 204.5,524.5 205.5,525.5 206.5,526.5 207.5,527.5 208.5,528.5 208.5,529.5 209.5,529.5 209.5,530.5 210.5,530.5 210.5,531.5 211.5,531.5 211.5,532.5 212.5,532.5 212.5,533.5 213.5,533.5 213.5,534.5 214.5,534.5 214.5,535.5 215.5,535.5 216.5,536.5 217.5,537.5 218.5,538.5 219.5,539.5 220.5,540.5 221.5,541.5 222.5,541.5 222.5,542.5 223.5,542.5 223.5,543.5 224.5,543.5 224.5,544.5 225.5,544.5 226.5,545.5 227.5,546.5 228.5,546.5 228.5,547.5 229.5,547.5 229.5,548.5 230.5,548.5 231.5,549.5 232.5,550.5 233.5,550.5 233.5,551.5 234.5,551.5 234.5,552.5 235.5,552.5 236.5,553.5 237.5,553.5 237.5,554.5 238.5,554.5 239.5,555.5 240.5,556.5 241.5,556.5 241.5,557.5 242.5,557.5 243.5,558.5 244.5,558.5 244.5,559.5 245.5,559.5 246.5,560.5 247.5,560.5 247.5,561.5 248.5,561.5 249.5,562.5 250.5,562.5 250.5,563.5 251.5,563.5 252.5,564.5 253.5,564.5 253.5,565.5 254.5,565.5 255.5,565.5 255.5,566.5 256.5,566.5 257.5,567.5 258.5,567.5 259.5,568.5 260.5,568.5 261.5,569.5 262.5,569.5 263.5,570.5 264.5,570.5 264.5,571.5 265.5,571.5 266.5,571.5 266.5,572.5 267.5,572.5 268.5,572.5 268.5,573.5 269.5,573.5 270.5,573.5 271.5,574.5 272.5,574.5 273.5,575.5 274.5,575.5 275.5,576.5 276.5,576.5 277.5,576.5 277.5,577.5 278.5,577.5 279.5,577.5 280.5,578.5 281.5,578.5 282.5,579.5 283.5,579.5 284.5,579.5 284.5,580.5 285.5,580.5 286.5,580.5 287.5,580.5 287.5,581.5 288.5,581.5 289.5,581.5 290.5,582.5 291.5,582.5 292.5,582.5 292.5,583.5 293.5,583.5 294.5,583.5 295.5,583.5 295.5,584.5 296.5,584.5 297.5,584.5 298.5,584.5 298.5,585.5 299.5,585.5 300.5,585.5 301.5,585.5 301.5,586.5 302.5,586.5 303.5,586.5 304.5,586.5 305.5,587.5 306.5,587.5 307.5,587.5 308.5,588.5 309.5,588.5 310.5,588.5 311.5,588.5 311.5,589.5 312.5,589.5 313.5,589.5 314.5,589.5 315.5,589.5 315.5,590.5 316.5,590.5 317.5,590.5 318.5,590.5 319.5,591.5 320.5,591.5 321.5,591.5 322.5,591.5 323.5,591.5 323.5,592.5 324.5,592.5 325.5,592.5 326.5,592.5 327.5,592.5 327.5,593.5 328.5,593.5 329.5,593.5 330.5,593.5 331.5,593.5 332.5,594.5 333.5,594.5 334.5,594.5 335.5,594.5 336.5,594.5 337.5,595.5 338.5,595.5 339.5,595.5 340.5,595.5 341.5,595.5 341.5,596.5 342.5,596.5 343.5,596.5 344.5,596.5 345.5,596.5 346.5,596.5 347.5,596.5 347.5,597.5 348.5,597.5 349.5,597.5 350.5,597.5 351.5,597.5 352.5,597.5 353.5,597.5 353.5,598.5 354.5,598.5 355.5,598.5 356.5,598.5 357.5,598.5 358.5,598.5 359.5,598.5 360.5,599.5 361.5,599.5 362.5,599.5 363.5,599.5 364.5,599.5 365.5,599.5 366.5,599.5 367.5,599.5 367.5,600.5 368.5,600.5 369.5,600.5 370.5,600.5 371.5,600.5 372.5,600.5 373.5,600.5 374.5,600.5 375.5,600.5 375.5,601.5 376.5,601.5 377.5,601.5 378.5,601.5 379.5,601.5 380.5,601.5 381.5,601.5 382.5,601.5 383.5,601.5 384.5,601.5 385.5,602.5 386.5,602.5 387.5,602.5 388.5,602.5 389.5,602.5 390.5,602.5 391.5,602.5 392.5,602.5 393.5,602.5 394.5,602.5 395.5,602.5 396.5,602.5 396.5,603.5 397.5,603.5 398.5,603.5 399.5,603.5 400.5,603.5 401.5,603.5 402.5,603.5 403.5,603.5 404.5,603.5 405.5,603.5 406.5,603.5 407.5,603.5 408.5,603.5 409.5,603.5 410.5,604.5 411.5,604.5 412.5,604.5 413.5,604.5 414.5,604.5 415.5,604.5 416.5,604.5 417.5,604.5 418.5,604.5 419.5,604.5 420.5,604.5 421.5,604.5 422.5,604.5 423.5,604.5 424.5,604.5 425.5,604.5 426.5,604.5 427.5,604.5 428.5,605.5 429.5,605.5 430.5,605.5 431.5,605.5 432.5,605.5 433.5,605.5 434.5,605.5 435.5,605.5 436.5,605.5 437.5,605.5 438.5,605.5 439.5,605.5 440.5,605.5 441.5,605.5 442.5,605.5 443.5,605.5 444.5,605.5 445.5,605.5 446.5,605.5 447.5,605.5 448.5,605.5 449.5,605.5 450.5,605.5 451.5,605.5 452.5,605.5 453.5,605.5 454.5,605.5 454.5,606.5 455.5,606.5 456.5,606.5 457.5,606.5 458.5,606.5 459.5,606.5 460.5,606.5 461.5,606.5 462.5,606.5 463.5,606.5 464.5,606.5 465.5,606.5 466.5,606.5 467.5,606.5 468.5,606.5 469.5,606.5 470.5,606.5 471.5,606.5 472.5,606.5 473.5,606.5 474.5,606.5 475.5,606.5 476.5,606.5 477.5,606.5 478.5,606.5 479.5,606.5 480.5,606.5 481.5,606.5 482.5,606.5 483.5,606.5 484.5,606.5 485.5,606.5 486.5,606.5 487.5,606.5 488.5,606.5 489.5,606.5 490.5,606.5 491.5,606.5 492.5,606.5 493.5,606.5 494.5,606.5 495.5,606.5 496.5,606.5 497.5,606.5 498.5,606.5 499.5,606.5 500.5,606.5 501.5,606.5 502.5,606.5 503.5,606.5 504.5,606.5 505.5,606.5 506.5,606.5 507.5,606.5 508.5,606.5 509.5,606.5 510.5,606.5 511.5,606.5 512.5,606.5 513.5,606.5 514.5,606.5 515.5,606.5 516.5,606.5 517.5,606.5 518.5,606.5 519.5,606.5 520.5,606.5 521.5,606.5 522.5,606.5 523.5,606.5 524.5,606.5 524.5,607.5 525.5,607.5 526.5,607.5 527.5,607.5 528.5,607.5 529.5,607.5 530.5,607.5 531.5,607.5 532.5,607.5 533.5,607.5 534.5,607.5 535.5,607.5 536.5,607.5 537.5,607.5 538.5,607.5 539.5,607.5 540.5,607.5 541.5,607.5 542.5,607.5 543.5,607.5 544.5,607.5 545.5,607.5 546.5,607.5 547.5,607.5 548.5,607.5 549.5,607.5 550.5,607.5 551.5,607.5 552.5,607.5 553.5,607.5 554.5,607.5 555.5,607.5 556.5,607.5 557.5,607.5 558.5,607.5 559.5,607.5 560.5,607.5 561.5,607.5 562.5,607.5 563.5,607.5 564.5,607.5 565.5,607.5 566.5,607.5 567.5,607.5 568.5,607.5 569.5,607.5 570.5,607.5 571.5,607.5 572.5,607.5 573.5,607.5 574.5,607.5 575.5,607.5 576.5,607.5 577.5,607.5 578.5,607.5 579.5,607.5 580.5,607.5 581.5,607.5 582.5,607.5 583.5,607.5 584.5,607.5 585.5,607.5 586.5,607.5 587.5,607.5 588.5,607.5 589.5,607.5 590.5,607.5 591.5,607.5 592.5,607.5 593.5,607.5 594.5,607.5 595.5,607.5 596.5,607.5 597.5,607.5 598.5,607.5 599.5,607.5 600.5,607.5 601.5,607.5 602.5,607.5 603.5,607.5 604.5,607.5 605.5,607.5 606.5,607.5 607.5,607.5 608.5,607.5 609.5,607.5 610.5,607.5 611.5,607.5 612.5,607.5 613.5,607.5 614.5,607.5" stroke="#0000ff" stroke-width="1" fill="none" shape-rendering="crispEdges"/>
</g>
<rect x="806" y="243" width="202" height="1" fill="#0000ff"/>
<rect x="1007" y="243" width="8" height="1" fill="#000080"/>
<rect x="1080" y="243" width="9" height="1" fill="#000080"/>
<rect x="1089" y="243" width="150" height="1" fill="#0000ff"/>
<rect x="752" y="255" width="55" height="1" fill="#0000ff"/>
<rect x="752" y="231" width="55" height="1" fill="#0000ff"/>
<rect x="740" y="242" width="1" height="1" fill="#0000ff"/>
<rect x="741" y="241" width="1" height="1" fill="#0000ff"/>
<rect x="745" y="237" width="2" height="1" fill="#0000ff"/>
<rect x="750" y="253" width="1" height="1" fill="#0000ff"/>
<rect x="751" y="254" width="1" height="1" fill="#0000ff"/>
<rect x="747" y="250" width="1" height="1" fill="#0000ff"/>
<rect x="740" y="244" width="1" height="1" fill="#0000ff"/>
<rect x="748" y="251" width="1" height="1" fill="#0000ff"/>
<rect x="741" y="245" width="1" height="1" fill="#0000ff"/>
<rect x="747" y="236" width="1" height="1" fill="#0000ff"/>
<rect x="743" y="247" width="1" height="1" fill="#0000ff"/>
<rect x="744" y="248" width="1" height="1" fill="#0000ff"/>
<rect x="739" y="243" width="1" height="1" fill="#0000ff"/>
<rect x="745" y="249" width="2" height="1" fill="#0000ff"/>
<rect x="742" y="246" width="1" height="1" fill="#0000ff"/>
<rect x="744" y="238" width="1" height="1" fill="#0000ff"/>
<rect x="750" y="233" width="1" height="1" fill="#0000ff"/>
<rect x="751" y="232" width="1" height="1" fill="#0000ff"/>
<rect x="749" y="234" width="1" height="1" fill="#0000ff"/>
<rect x="749" y="252" width="1" height="1" fill="#0000ff"/>
<rect x="742" y="240" width="1" height="1" fill="#0000ff"/>
<rect x="743" y="239" width="1" height="1" fill="#0000ff"/>
<rect x="748" y="235" width="1" height="1" fill="#0000ff"/>
<rect x="806" y="255" width="1" height="1" fill="#0000ff"/>
<rect x="806" y="261" width="1" height="1" fill="#0000ff"/>
<rect x="806" y="264" width="1" height="1" fill="#0000ff"/>
<rect x="806" y="270" width="1" height="1" fill="#0000ff"/>
<rect x="806" y="267" width="1" height="1" fill="#0000ff"/>
<rect x="806" y="273" width="1" height="1" fill="#0000ff"/>
<rect x="806" y="276" width="1" height="1" fill="#0000ff"/>
<rect x="806" y="233" width="1" height="1" fill="#0000ff"/>
<rect x="806" y="239" width="1" height="1" fill="#0000ff"/>
<rect x="806" y="236" width="1" height="1" fill="#0000ff"/>
<rect x="806" y="242" width="1" height="1" fill="#0000ff"/>
<rect x="806" y="245" width="1" height="1" fill="#0000ff"/>
<rect x="806" y="251" width="1" height="1" fill="#0000ff"/>
<rect x="806" y="248" width="1" height="1" fill="#0000ff"/>
<rect x="806" y="254" width="1" height="1" fill="#0000ff"/>
<rect x="806" y="257" width="1" height="1" fill="#0000ff"/>
<rect x="806" y="263" width="1" height="1" fill="#0000ff"/>
<rect x="806" y="260" width="1" height="1" fill="#0000ff"/>
<rect x="806" y="266" width="1" height="1" fill="#0000ff"/>
<rect x="806" y="272" width="1" height="1" fill="#0000ff"/>
<rect x="806" y="269" width="1" height="1" fill="#0000ff"/>
<rect x="806" y="275" width="1" height="1" fill="#0000ff"/>
<rect x="806" y="232" width="1" height="1" fill="#0000ff"/>
<rect x="806" y="235" width="1" height="1" fill="#0000ff"/>
<rect x="806" y="238" width="1" height="1" fill="#0000ff"/>
<rect x="806" y="244" width="1" height="1" fill="#0000ff"/>
<rect x="806" y="241" width="1" height="1" fill="#0000ff"/>
<rect x="806" y="247" width="1" height="1" fill="#0000ff"/>
<rect x="806" y="253" width="1" height="1" fill="#0000ff"/>
<rect x="806" y="250" width="1" height="1" fill="#0000ff"/>
<rect x="806" y="256" width="1" height="1" fill="#0000ff"/>
<rect x="806" y="259" width="1" height="1" fill="#0000ff"/>
<rect x="806" y="265" width="1" height="1" fill="#0000ff"/>
<rect x="806" y="262" width="1" height="1" fill="#0000ff"/>
<rect x="806" y="268" width="1" height="1" fill="#0000ff"/>
<rect x="806" y="271" width="1" height="1" fill="#0000ff"/>
<rect x="806" y="277" width="1" height="1" fill="#0000ff"/>
<rect x="806" y="274" width="1" height="1" fill="#0000ff"/>
<rect x="806" y="231" width="1" height="1" fill="#0000ff"/>
<rect x="806" y="237" width="1" height="1" fill="#0000ff"/>
<rect x="806" y="234" width="1" height="1" fill="#0000ff"/>
<rect x="806" y="240" width="1" height="1" fill="#0000ff"/>
<rect x="806" y="246" width="1" height="1" fill="#0000ff"/>
<rect x="806" y="243" width="1" height="1" fill="#0000ff"/>
<rect x="806" y="249" width="1" height="1" fill="#0000ff"/>
<rect x="806" y="252" width="1" height="1" fill="#0000ff"/>
<rect x="806" y="258" width="1" height="1" fill="#0000ff"/>
<rect x="1238" y="231" width="55" height="1" fill="#0000ff"/>
<rect x="1238" y="255" width="55" height="1" fill="#0000ff"/>
<rect x="1300" y="247" width="1" height="1" fill="#0000ff"/>
<rect x="1303" y="244" width="1" height="1" fill="#0000ff"/>
<rect x="1301" y="246" width="1" height="1" fill="#0000ff"/>
<rect x="1298" y="249" width="1" height="1" fill="#0000ff"/>
<rect x="1296" y="251" width="1" height="1" fill="#0000ff"/>
<rect x="1297" y="250" width="1" height="1" fill="#0000ff"/>
<rect x="1296" y="235" width="1" height="1" fill="#0000ff"/>
<rect x="1297" y="236" width="1" height="1" fill="#0000ff"/>
<rect x="1293" y="232" width="1" height="1" fill="#0000ff"/>
<rect x="1299" y="248" width="1" height="1" fill="#0000ff"/>
<rect x="1294" y="233" width="1" height="1" fill="#0000ff"/>
<rect x="1304" y="243" width="1" height="1" fill="#0000ff"/>
<rect x="1300" y="239" width="1" height="1" fill="#0000ff"/>
<rect x="1295" y="234" width="1" height="1" fill="#0000ff"/>
<rect x="1295" y="252" width="1" height="1" fill="#0000ff"/>
<rect x="1301" y="240" width="1" height="1" fill="#0000ff"/>
<rect x="1293" y="254" width="1" height="1" fill="#0000ff"/>
<rect x="1302" y="241" width="1" height="1" fill="#0000ff"/>
<rect x="1298" y="237" width="1" height="1" fill="#0000ff"/>
<rect x="1303" y="242" width="1" height="1" fill="#0000ff"/>
<rect x="1299" y="238" width="1" height="1" fill="#0000ff"/>
<rect x="1294" y="253" width="1" height="1" fill="#0000ff"/>
<rect x="1302" y="245" width="1" height="1" fill="#0000ff"/>
<rect x="1238" y="251" width="1" height="1" fill="#0000ff"/>
<rect x="1238" y="257" width="1" height="1" fill="#0000ff"/>
<rect x="1238" y="254" width="1" height="1" fill="#0000ff"/>
<rect x="1238" y="260" width="1" height="1" fill="#0000ff"/>
<rect x="1238" y="266" width="1" height="1" fill="#0000ff"/>
<rect x="1238" y="263" width="1" height="1" fill="#0000ff"/>
<rect x="1238" y="269" width="1" height="1" fill="#0000ff"/>
<rect x="1238" y="272" width="1" height="1" fill="#0000ff"/>
<rect x="1238" y="275" width="1" height="1" fill="#0000ff"/>
<rect x="1238" y="232" width="1" height="1" fill="#0000ff"/>
<rect x="1238" y="238" width="1" height="1" fill="#0000ff"/>
<rect x="1238" y="235" width="1" height="1" fill="#0000ff"/>
<rect x="1238" y="241" width="1" height="1" fill="#0000ff"/>
<rect x="1238" y="244" width="1" height="1" fill="#0000ff"/>
<rect x="1238" y="250" width="1" height="1" fill="#0000ff"/>
<rect x="1238" y="247" width="1" height="1" fill="#0000ff"/>
<rect x="1238" y="253" width="1" height="1" fill="#0000ff"/>
<rect x="1238" y="259" width="1" height="1" fill="#0000ff"/>
<rect x="1238" y="256" width="1" height="1" fill="#0000ff"/>
<rect x="1238" y="262" width="1" height="1" fill="#0000ff"/>
<rect x="1238" y="265" width="1" height="1" fill="#0000ff"/>
<rect x="1238" y="271" width="1" height="1" fill="#0000ff"/>
<rect x="1238" y="268" width="1" height="1" fill="#0000ff"/>
<rect x="1238" y="274" width="1" height="1" fill="#0000ff"/>
<rect x="1238" y="277" width="1" height="1" fill="#0000ff"/>
<rect x="1238" y="231" width="1" height="1" fill="#0000ff"/>
<rect x="1238" y="234" width="1" height="1" fill="#0000ff"/>
<rect x="1238" y="240" width="1" height="1" fill="#0000ff"/>
<rect x="1238" y="237" width="1" height="1" fill="#0000ff"/>
<rect x="1238" y="243" width="1" height="1" fill="#0000ff"/>
<rect x="1238" y="246" width="1" height="1" fill="#0000ff"/>
<rect x="1238" y="252" width="1" height="1" fill="#0000ff"/>
<rect x="1238" y="249" width="1" height="1" fill="#0000ff"/>
<rect x="1238" y="255" width="1" height="1" fill="#0000ff"/>
<rect x="1238" y="258" width="1" height="1" fill="#0000ff"/>
<rect x="1238" y="264" width="1" height="1" fill="#0000ff"/>
<rect x="1238" y="261" width="1" height="1" fill="#0000ff"/>
<rect x="1238" y="267" width="1" height="1" fill="#0000ff"/>
<rect x="1238" y="270" width="1" height="1" fill="#0000ff"/>
<rect x="1238" y="276" width="1" height="1" fill="#0000ff"/>
<rect x="1238" y="273" width="1" height="1" fill="#0000ff"/>
<rect x="1238" y="233" width="1" height="1" fill="#0000ff"/>
<rect x="1238" y="236" width="1" height="1" fill="#0000ff"/>
<rect x="1238" y="239" width="1" height="1" fill="#0000ff"/>
<rect x="1238" y="245" width="1" height="1" fill="#0000ff"/>
<rect x="1238" y="242" width="1" height="1" fill="#0000ff"/>
<rect x="1238" y="248" width="1" height="1" fill="#0000ff"/>
<rect x="806" y="282" width="1" height="1" fill="#000080"/>
<rect x="806" y="279" width="1" height="1" fill="#000080"/>
<rect x="806" y="285" width="1" height="1" fill="#000080"/>
<rect x="806" y="291" width="1" height="1" fill="#000080"/>
<rect x="806" y="288" width="1" height="1" fill="#000080"/>
<rect x="806" y="294" width="1" height="1" fill="#000080"/>
<rect x="806" y="297" width="1" height="1" fill="#000080"/>
<rect x="806" y="303" width="1" height="1" fill="#000080"/>
<rect x="806" y="300" width="1" height="1" fill="#000080"/>
<rect x="806" y="306" width="1" height="1" fill="#000080"/>
<rect x="806" y="278" width="1" height="1" fill="#000080"/>
<rect x="806" y="284" width="1" height="1" fill="#000080"/>
<rect x="806" y="281" width="1" height="1" fill="#000080"/>
<rect x="806" y="287" width="1" height="1" fill="#000080"/>
<rect x="806" y="290" width="1" height="1" fill="#000080"/>
<rect x="806" y="296" width="1" height="1" fill="#000080"/>
<rect x="806" y="293" width="1" height="1" fill="#000080"/>
<rect x="806" y="299" width="1" height="1" fill="#000080"/>
<rect x="806" y="302" width="1" height="1" fill="#000080"/>
<rect x="806" y="305" width="1" height="1" fill="#000080"/>
<rect x="806" y="280" width="1" height="1" fill="#000080"/>
<rect x="806" y="283" width="1" height="1" fill="#000080"/>
<rect x="806" y="289" width="1" height="1" fill="#000080"/>
<rect x="806" y="286" width="1" height="1" fill="#000080"/>
<rect x="806" y="292" width="1" height="1" fill="#000080"/>
<rect x="806" y="298" width="1" height="1" fill="#000080"/>
<rect x="806" y="295" width="1" height="1" fill="#000080"/>
<rect x="806" y="301" width="1" height="1" fill="#000080"/>
<rect x="806" y="304" width="1" height="1" fill="#000080"/>
<rect x="806" y="322" width="1" height="1" fill="#000080"/>
<rect x="806" y="319" width="1" height="1" fill="#000080"/>
<rect x="806" y="325" width="1" height="1" fill="#000080"/>
<rect x="806" y="328" width="1" height="1" fill="#000080"/>
<rect x="806" y="334" width="1" height="1" fill="#000080"/>
<rect x="806" y="331" width="1" height="1" fill="#000080"/>
<rect x="806" y="337" width="1" height="1" fill="#000080"/>
<rect x="806" y="340" width="1" height="1" fill="#000080"/>
<rect x="806" y="315" width="1" height="1" fill="#000080"/>
<rect x="806" y="318" width="1" height="1" fill="#000080"/>
<rect x="806" y="321" width="1" height="1" fill="#000080"/>
<rect x="806" y="327" width="1" height="1" fill="#000080"/>
<rect x="806" y="324" width="1" height="1" fill="#000080"/>
<rect x="806" y="330" width="1" height="1" fill="#000080"/>
<rect x="806" y="336" width="1" height="1" fill="#000080"/>
<rect x="806" y="333" width="1" height="1" fill="#000080"/>
<rect x="806" y="339" width="1" height="1" fill="#000080"/>
<rect x="806" y="342" width="1" height="1" fill="#000080"/>
<rect x="806" y="317" width="1" height="1" fill="#000080"/>
<rect x="806" y="314" width="1" height="1" fill="#000080"/>
<rect x="806" y="320" width="1" height="1" fill="#000080"/>
<rect x="806" y="323" width="1" height="1" fill="#000080"/>
<rect x="806" y="329" width="1" height="1" fill="#000080"/>
<rect x="806" y="326" width="1" height="1" fill="#000080"/>
<rect x="806" y="332" width="1" height="1" fill="#000080"/>
<rect x="806" y="335" width="1" height="1" fill="#000080"/>
<rect x="806" y="341" width="1" height="1" fill="#000080"/>
<rect x="806" y="338" width="1" height="1" fill="#000080"/>
<rect x="806" y="316" width="1" height="1" fill="#000080"/>
<rect x="790" y="306" width="34" height="1" fill="#000080"/>
<rect x="790" y="314" width="34" height="1" fill="#000080"/>
<rect x="806" y="380" width="1" height="1" fill="#0000ff"/>
<rect x="806" y="386" width="1" height="1" fill="#0000ff"/>
<rect x="806" y="383" width="1" height="1" fill="#0000ff"/>
<rect x="806" y="389" width="1" height="1" fill="#0000ff"/>
<rect x="806" y="392" width="1" height="1" fill="#0000ff"/>
<rect x="806" y="343" width="1" height="1" fill="#0000ff"/>
<rect x="806" y="346" width="1" height="1" fill="#0000ff"/>
<rect x="806" y="349" width="1" height="1" fill="#0000ff"/>
<rect x="806" y="355" width="1" height="1" fill="#0000ff"/>
<rect x="806" y="352" width="1" height="1" fill="#0000ff"/>
<rect x="806" y="358" width="1" height="1" fill="#0000ff"/>
<rect x="806" y="361" width="1" height="1" fill="#0000ff"/>
<rect x="806" y="367" width="1" height="1" fill="#0000ff"/>
<rect x="806" y="364" width="1" height="1" fill="#0000ff"/>
<rect x="806" y="370" width="1" height="1" fill="#0000ff"/>
<rect x="806" y="373" width="1" height="1" fill="#0000ff"/>
<rect x="806" y="379" width="1" height="1" fill="#0000ff"/>
<rect x="806" y="376" width="1" height="1" fill="#0000ff"/>
<rect x="806" y="382" width="1" height="1" fill="#0000ff"/>
<rect x="806" y="388" width="1" height="1" fill="#0000ff"/>
<rect x="806" y="385" width="1" height="1" fill="#0000ff"/>
<rect x="806" y="391" width="1" height="1" fill="#0000ff"/>
<rect x="806" y="348" width="1" height="1" fill="#0000ff"/>
<rect x="806" y="345" width="1" height="1" fill="#0000ff"/>
<rect x="806" y="351" width="1" height="1" fill="#0000ff"/>
<rect x="806" y="354" width="1" height="1" fill="#0000ff"/>
<rect x="806" y="360" width="1" height="1" fill="#0000ff"/>
<rect x="806" y="357" width="1" height="1" fill="#0000ff"/>
<rect x="806" y="363" width="1" height="1" fill="#0000ff"/>
<rect x="806" y="366" width="1" height="1" fill="#0000ff"/>
<rect x="806" y="372" width="1" height="1" fill="#0000ff"/>
<rect x="806" y="369" width="1" height="1" fill="#0000ff"/>
<rect x="806" y="375" width="1" height="1" fill="#0000ff"/>
<rect x="806" y="381" width="1" height="1" fill="#0000ff"/>
<rect x="806" y="378" width="1" height="1" fill="#0000ff"/>
<rect x="806" y="384" width="1" height="1" fill="#0000ff"/>
<rect x="806" y="387" width="1" height="1" fill="#0000ff"/>
<rect x="806" y="393" width="1" height="1" fill="#0000ff"/>
<rect x="806" y="390" width="1" height="1" fill="#0000ff"/>
<rect x="806" y="344" width="1" height="1" fill="#0000ff"/>
<rect x="806" y="347" width="1" height="1" fill="#0000ff"/>
<rect x="806" y="353" width="1" height="1" fill="#0000ff"/>
<rect x="806" y="350" width="1" height="1" fill="#0000ff"/>
<rect x="806" y="356" width="1" height="1" fill="#0000ff"/>
<rect x="806" y="362" width="1" height="1" fill="#0000ff"/>
<rect x="806" y="359" width="1" height="1" fill="#0000ff"/>
<rect x="806" y="365" width="1" height="1" fill="#0000ff"/>
<rect x="806" y="368" width="1" height="1" fill="#0000ff"/>
<rect x="806" y="374" width="1" height="1" fill="#0000ff"/>
<rect x="806" y="371" width="1" height="1" fill="#0000ff"/>
<rect x="806" y="377" width="1" height="1" fill="#0000ff"/>
<rect x="790" y="426" width="1" height="1" fill="#000080"/>
<rect x="791" y="425" width="2" height="1" fill="#000080"/>
<rect x="793" y="424" width="2" height="1" fill="#000080"/>
<rect x="810" y="403" width="2" height="1" fill="#000080"/>
<rect x="808" y="450" width="2" height="1" fill="#000080"/>
<rect x="806" y="398" width="1" height="1" fill="#000080"/>
<rect x="801" y="420" width="2" height="1" fill="#000080"/>
<rect x="806" y="471" width="1" height="1" fill="#000080"/>
<rect x="799" y="464" width="2" height="1" fill="#000080"/>
<rect x="818" y="445" width="2" height="1" fill="#000080"/>
<rect x="806" y="451" width="2" height="1" fill="#000080"/>
<rect x="799" y="421" width="2" height="1" fill="#000080"/>
<rect x="799" y="431" width="2" height="1" fill="#000080"/>
<rect x="791" y="427" width="2" height="1" fill="#000080"/>
<rect x="816" y="446" width="2" height="1" fill="#000080"/>
<rect x="820" y="408" width="2" height="1" fill="#000080"/>
<rect x="812" y="404" width="2" height="1" fill="#000080"/>
<rect x="813" y="438" width="2" height="1" fill="#000080"/>
<rect x="806" y="400" width="1" height="1" fill="#000080"/>
<rect x="809" y="416" width="2" height="1" fill="#000080"/>
<rect x="815" y="439" width="2" height="1" fill="#000080"/>
<rect x="803" y="419" width="2" height="1" fill="#000080"/>
<rect x="807" y="435" width="2" height="1" fill="#000080"/>
<rect x="815" y="413" width="2" height="1" fill="#000080"/>
<rect x="803" y="466" width="2" height="1" fill="#000080"/>
<rect x="813" y="414" width="2" height="1" fill="#000080"/>
<rect x="795" y="462" width="2" height="1" fill="#000080"/>
<rect x="792" y="458" width="2" height="1" fill="#000080"/>
<rect x="811" y="415" width="2" height="1" fill="#000080"/>
<rect x="816" y="406" width="2" height="1" fill="#000080"/>
<rect x="817" y="440" width="2" height="1" fill="#000080"/>
<rect x="809" y="436" width="2" height="1" fill="#000080"/>
<rect x="801" y="432" width="2" height="1" fill="#000080"/>
<rect x="821" y="410" width="2" height="1" fill="#000080"/>
<rect x="811" y="437" width="2" height="1" fill="#000080"/>
<rect x="805" y="467" width="2" height="1" fill="#000080"/>
<rect x="800" y="454" width="2" height="1" fill="#000080"/>
<rect x="791" y="460" width="2" height="1" fill="#000080"/>
<rect x="798" y="455" width="2" height="1" fill="#000080"/>
<rect x="819" y="441" width="2" height="1" fill="#000080"/>
<rect x="804" y="452" width="2" height="1" fill="#000080"/>
<rect x="797" y="422" width="2" height="1" fill="#000080"/>
<rect x="805" y="434" width="2" height="1" fill="#000080"/>
<rect x="797" y="430" width="2" height="1" fill="#000080"/>
<rect x="818" y="407" width="2" height="1" fill="#000080"/>
<rect x="802" y="453" width="2" height="1" fill="#000080"/>
<rect x="801" y="465" width="2" height="1" fill="#000080"/>
<rect x="793" y="461" width="2" height="1" fill="#000080"/>
<rect x="795" y="423" width="2" height="1" fill="#000080"/>
<rect x="821" y="442" width="2" height="1" fill="#000080"/>
<rect x="812" y="448" width="2" height="1" fill="#000080"/>
<rect x="814" y="447" width="2" height="1" fill="#000080"/>
<rect x="806" y="473" width="1" height="1" fill="#000080"/>
<rect x="805" y="418" width="2" height="1" fill="#000080"/>
<rect x="820" y="444" width="2" height="1" fill="#000080"/>
<rect x="822" y="443" width="2" height="1" fill="#000080"/>
<rect x="793" y="428" width="2" height="1" fill="#000080"/>
<rect x="822" y="409" width="2" height="1" fill="#000080"/>
<rect x="797" y="463" width="2" height="1" fill="#000080"/>
<rect x="806" y="475" width="1" height="1" fill="#000080"/>
<rect x="807" y="417" width="2" height="1" fill="#000080"/>
<rect x="817" y="412" width="2" height="1" fill="#000080"/>
<rect x="819" y="411" width="2" height="1" fill="#000080"/>
<rect x="806" y="395" width="1" height="1" fill="#000080"/>
<rect x="796" y="456" width="2" height="1" fill="#000080"/>
<rect x="806" y="468" width="1" height="1" fill="#000080"/>
<rect x="790" y="459" width="2" height="1" fill="#000080"/>
<rect x="794" y="457" width="2" height="1" fill="#000080"/>
<rect x="814" y="405" width="2" height="1" fill="#000080"/>
<rect x="803" y="433" width="2" height="1" fill="#000080"/>
<rect x="806" y="397" width="1" height="1" fill="#000080"/>
<rect x="795" y="429" width="2" height="1" fill="#000080"/>
<rect x="808" y="402" width="2" height="1" fill="#000080"/>
<rect x="806" y="470" width="1" height="1" fill="#000080"/>
<rect x="810" y="449" width="2" height="1" fill="#000080"/>
<rect x="806" y="399" width="1" height="1" fill="#000080"/>
<rect x="806" y="472" width="1" height="1" fill="#000080"/>
<rect x="806" y="401" width="2" height="1" fill="#000080"/>
<rect x="806" y="474" width="1" height="1" fill="#000080"/>
<rect x="806" y="394" width="1" height="1" fill="#000080"/>
<rect x="806" y="396" width="1" height="1" fill="#000080"/>
<rect x="806" y="469" width="1" height="1" fill="#000080"/>
<rect x="806" y="480" width="1" height="1" fill="#0000ff"/>
<rect x="806" y="486" width="1" height="1" fill="#0000ff"/>
<rect x="806" y="476" width="1" height="1" fill="#0000ff"/>
<rect x="806" y="489" width="1" height="1" fill="#0000ff"/>
<rect x="806" y="479" width="1" height="1" fill="#0000ff"/>
<rect x="806" y="492" width="1" height="1" fill="#0000ff"/>
<rect x="806" y="482" width="1" height="1" fill="#0000ff"/>
<rect x="806" y="488" width="1" height="1" fill="#0000ff"/>
<rect x="806" y="478" width="1" height="1" fill="#0000ff"/>
<rect x="806" y="485" width="1" height="1" fill="#0000ff"/>
<rect x="806" y="491" width="1" height="1" fill="#0000ff"/>
<rect x="806" y="481" width="1" height="1" fill="#0000ff"/>
<rect x="806" y="484" width="1" height="1" fill="#0000ff"/>
<rect x="806" y="490" width="1" height="1" fill="#0000ff"/>
<rect x="806" y="487" width="1" height="1" fill="#0000ff"/>
<rect x="806" y="477" width="1" height="1" fill="#0000ff"/>
<rect x="806" y="483" width="1" height="1" fill="#0000ff"/>
<rect x="790" y="492" width="34" height="1" fill="#0000ff"/>
<rect x="803" y="506" width="1" height="1" fill="#0000ff"/>
<rect x="809" y="506" width="1" height="1" fill="#0000ff"/>
<rect x="798" y="501" width="1" height="1" fill="#0000ff"/>
<rect x="814" y="501" width="1" height="1" fill="#0000ff"/>
<rect x="799" y="502" width="1" height="1" fill="#0000ff"/>
<rect x="813" y="502" width="1" height="1" fill="#0000ff"/>
<rect x="797" y="499" width="1" height="1" fill="#0000ff"/>
<rect x="816" y="499" width="1" height="1" fill="#0000ff"/>
<rect x="795" y="497" width="1" height="1" fill="#0000ff"/>
<rect x="818" y="497" width="1" height="1" fill="#0000ff"/>
<rect x="794" y="496" width="1" height="1" fill="#0000ff"/>
<rect x="819" y="496" width="1" height="1" fill="#0000ff"/>
<rect x="804" y="507" width="1" height="1" fill="#0000ff"/>
<rect x="808" y="507" width="1" height="1" fill="#0000ff"/>
<rect x="802" y="505" width="1" height="1" fill="#0000ff"/>
<rect x="810" y="505" width="1" height="1" fill="#0000ff"/>
<rect x="793" y="495" width="1" height="1" fill="#0000ff"/>
<rect x="820" y="495" width="1" height="1" fill="#0000ff"/>
<rect x="796" y="498" width="1" height="1" fill="#0000ff"/>
<rect x="817" y="498" width="1" height="1" fill="#0000ff"/>
<rect x="798" y="500" width="1" height="1" fill="#0000ff"/>
<rect x="815" y="500" width="1" height="1" fill="#0000ff"/>
<rect x="800" y="503" width="1" height="1" fill="#0000ff"/>
<rect x="812" y="503" width="1" height="1" fill="#0000ff"/>
<rect x="792" y="494" width="1" height="1" fill="#0000ff"/>
<rect x="821" y="494" width="1" height="1" fill="#0000ff"/>
<rect x="805" y="508" width="1" height="1" fill="#0000ff"/>
<rect x="807" y="508" width="1" height="1" fill="#0000ff"/>
<rect x="801" y="504" width="1" height="1" fill="#0000ff"/>
<rect x="811" y="504" width="1" height="1" fill="#0000ff"/>
<rect x="791" y="493" width="1" height="1" fill="#0000ff"/>
<rect x="822" y="493" width="1" height="1" fill="#0000ff"/>
<rect x="806" y="509" width="1" height="1" fill="#0000ff"/>
<rect x="906" y="244" width="1" height="1" fill="#0000ff"/>
<rect x="906" y="250" width="1" height="1" fill="#0000ff"/>
<rect x="906" y="247" width="1" height="1" fill="#0000ff"/>
<rect x="906" y="253" width="1" height="1" fill="#0000ff"/>
<rect x="906" y="256" width="1" height="1" fill="#0000ff"/>
<rect x="906" y="262" width="1" height="1" fill="#0000ff"/>
<rect x="906" y="259" width="1" height="1" fill="#0000ff"/>
<rect x="906" y="265" width="1" height="1" fill="#0000ff"/>
<rect x="906" y="271" width="1" height="1" fill="#0000ff"/>
<rect x="906" y="268" width="1" height="1" fill="#0000ff"/>
<rect x="906" y="274" width="1" height="1" fill="#0000ff"/>
<rect x="906" y="277" width="1" height="1" fill="#0000ff"/>
<rect x="906" y="243" width="1" height="1" fill="#0000ff"/>
<rect x="906" y="246" width="1" height="1" fill="#0000ff"/>
<rect x="906" y="252" width="1" height="1" fill="#0000ff"/>
<rect x="906" y="249" width="1" height="1" fill="#0000ff"/>
<rect x="906" y="255" width="1" height="1" fill="#0000ff"/>
<rect x="906" y="258" width="1" height="1" fill="#0000ff"/>
<rect x="906" y="264" width="1" height="1" fill="#0000ff"/>
<rect x="906" y="261" width="1" height="1" fill="#0000ff"/>
<rect x="906" y="267" width="1" height="1" fill="#0000ff"/>
<rect x="906" y="270" width="1" height="1" fill="#0000ff"/>
<rect x="906" y="276" width="1" height="1" fill="#0000ff"/>
<rect x="906" y="273" width="1" height="1" fill="#0000ff"/>
<rect x="906" y="245" width="1" height="1" fill="#0000ff"/>
<rect x="906" y="248" width="1" height="1" fill="#0000ff"/>
<rect x="906" y="251" width="1" height="1" fill="#0000ff"/>
<rect x="906" y="257" width="1" height="1" fill="#0000ff"/>
<rect x="906" y="254" width="1" height="1" fill="#0000ff"/>
<rect x="906" y="260" width="1" height="1" fill="#0000ff"/>
<rect x="906" y="263" width="1" height="1" fill="#0000ff"/>
<rect x="906" y="269" width="1" height="1" fill="#0000ff"/>
<rect x="906" y="266" width="1" height="1" fill="#0000ff"/>
<rect x="906" y="272" width="1" height="1" fill="#0000ff"/>
<rect x="906" y="275" width="1" height="1" fill="#0000ff"/>
<rect x="902" y="239" width="9" height="9" fill="#0000ff"/>
<rect x="906" y="284" width="1" height="1" fill="#000080"/>
<rect x="906" y="290" width="1" height="1" fill="#000080"/>
<rect x="906" y="287" width="1" height="1" fill="#000080"/>
<rect x="906" y="293" width="1" height="1" fill="#000080"/>
<rect x="906" y="296" width="1" height="1" fill="#000080"/>
<rect x="906" y="302" width="1" height="1" fill="#000080"/>
<rect x="906" y="299" width="1" height="1" fill="#000080"/>
<rect x="906" y="305" width="1" height="1" fill="#000080"/>
<rect x="906" y="283" width="1" height="1" fill="#000080"/>
<rect x="906" y="280" width="1" height="1" fill="#000080"/>
<rect x="906" y="286" width="1" height="1" fill="#000080"/>
<rect x="906" y="289" width="1" height="1" fill="#000080"/>
<rect x="906" y="295" width="1" height="1" fill="#000080"/>
<rect x="906" y="292" width="1" height="1" fill="#000080"/>
<rect x="906" y="298" width="1" height="1" fill="#000080"/>
<rect x="906" y="301" width="1" height="1" fill="#000080"/>
<rect x="906" y="304" width="1" height="1" fill="#000080"/>
<rect x="906" y="279" width="1" height="1" fill="#000080"/>
<rect x="906" y="282" width="1" height="1" fill="#000080"/>
<rect x="906" y="288" width="1" height="1" fill="#000080"/>
<rect x="906" y="285" width="1" height="1" fill="#000080"/>
<rect x="906" y="291" width="1" height="1" fill="#000080"/>
<rect x="906" y="297" width="1" height="1" fill="#000080"/>
<rect x="906" y="294" width="1" height="1" fill="#000080"/>
<rect x="906" y="300" width="1" height="1" fill="#000080"/>
<rect x="906" y="303" width="1" height="1" fill="#000080"/>
<rect x="906" y="306" width="1" height="1" fill="#000080"/>
<rect x="906" y="281" width="1" height="1" fill="#000080"/>
<rect x="906" y="278" width="1" height="1" fill="#000080"/>
<rect x="906" y="314" width="1" height="1" fill="#000080"/>
<rect x="906" y="317" width="1" height="1" fill="#000080"/>
<rect x="906" y="320" width="1" height="1" fill="#000080"/>
<rect x="906" y="326" width="1" height="1" fill="#000080"/>
<rect x="906" y="323" width="1" height="1" fill="#000080"/>
<rect x="906" y="329" width="1" height="1" fill="#000080"/>
<rect x="906" y="335" width="1" height="1" fill="#000080"/>
<rect x="906" y="332" width="1" height="1" fill="#000080"/>
<rect x="906" y="338" width="1" height="1" fill="#000080"/>
<rect x="906" y="341" width="1" height="1" fill="#000080"/>
<rect x="906" y="316" width="1" height="1" fill="#000080"/>
<rect x="906" y="319" width="1" height="1" fill="#000080"/>
<rect x="906" y="322" width="1" height="1" fill="#000080"/>
<rect x="906" y="328" width="1" height="1" fill="#000080"/>
<rect x="906" y="325" width="1" height="1" fill="#000080"/>
<rect x="906" y="331" width="1" height="1" fill="#000080"/>
<rect x="906" y="334" width="1" height="1" fill="#000080"/>
<rect x="906" y="340" width="1" height="1" fill="#000080"/>
<rect x="906" y="337" width="1" height="1" fill="#000080"/>
<rect x="906" y="315" width="1" height="1" fill="#000080"/>
<rect x="906" y="321" width="1" height="1" fill="#000080"/>
<rect x="906" y="318" width="1" height="1" fill="#000080"/>
<rect x="906" y="324" width="1" height="1" fill="#000080"/>
<rect x="906" y="327" width="1" height="1" fill="#000080"/>
<rect x="906" y="333" width="1" height="1" fill="#000080"/>
<rect x="906" y="330" width="1" height="1" fill="#000080"/>
<rect x="906" y="336" width="1" height="1" fill="#000080"/>
<rect x="906" y="342" width="1" height="1" fill="#000080"/>
<rect x="906" y="339" width="1" height="1" fill="#000080"/>
<rect x="889" y="306" width="35" height="1" fill="#000080"/>
<rect x="889" y="314" width="35" height="1" fill="#000080"/>
<rect x="906" y="348" width="1" height="1" fill="#0000ff"/>
<rect x="906" y="354" width="1" height="1" fill="#0000ff"/>
<rect x="906" y="351" width="1" height="1" fill="#0000ff"/>
<rect x="906" y="357" width="1" height="1" fill="#0000ff"/>
<rect x="906" y="360" width="1" height="1" fill="#0000ff"/>
<rect x="906" y="366" width="1" height="1" fill="#0000ff"/>
<rect x="906" y="363" width="1" height="1" fill="#0000ff"/>
<rect x="906" y="369" width="1" height="1" fill="#0000ff"/>
<rect x="906" y="372" width="1" height="1" fill="#0000ff"/>
<rect x="906" y="378" width="1" height="1" fill="#0000ff"/>
<rect x="906" y="375" width="1" height="1" fill="#0000ff"/>
<rect x="906" y="381" width="1" height="1" fill="#0000ff"/>
<rect x="906" y="387" width="1" height="1" fill="#0000ff"/>
<rect x="906" y="384" width="1" height="1" fill="#0000ff"/>
<rect x="906" y="390" width="1" height="1" fill="#0000ff"/>
<rect x="906" y="393" width="1" height="1" fill="#0000ff"/>
<rect x="906" y="347" width="1" height="1" fill="#0000ff"/>
<rect x="906" y="344" width="1" height="1" fill="#0000ff"/>
<rect x="906" y="350" width="1" height="1" fill="#0000ff"/>
<rect x="906" y="353" width="1" height="1" fill="#0000ff"/>
<rect x="906" y="359" width="1" height="1" fill="#0000ff"/>
<rect x="906" y="356" width="1" height="1" fill="#0000ff"/>
<rect x="906" y="362" width="1" height="1" fill="#0000ff"/>
<rect x="906" y="365" width="1" height="1" fill="#0000ff"/>
<rect x="906" y="371" width="1" height="1" fill="#0000ff"/>
<rect x="906" y="368" width="1" height="1" fill="#0000ff"/>
<rect x="906" y="374" width="1" height="1" fill="#0000ff"/>
<rect x="906" y="380" width="1" height="1" fill="#0000ff"/>
<rect x="906" y="377" width="1" height="1" fill="#0000ff"/>
<rect x="906" y="383" width="1" height="1" fill="#0000ff"/>
<rect x="906" y="386" width="1" height="1" fill="#0000ff"/>
<rect x="906" y="392" width="1" height="1" fill="#0000ff"/>
<rect x="906" y="389" width="1" height="1" fill="#0000ff"/>
<rect x="906" y="343" width="1" height="1" fill="#0000ff"/>
<rect x="906" y="346" width="1" height="1" fill="#0000ff"/>
<rect x="906" y="352" width="1" height="1" fill="#0000ff"/>
<rect x="906" y="349" width="1" height="1" fill="#0000ff"/>
<rect x="906" y="355" width="1" height="1" fill="#0000ff"/>
<rect x="906" y="361" width="1" height="1" fill="#0000ff"/>
<rect x="906" y="358" width="1" height="1" fill="#0000ff"/>
<rect x="906" y="364" width="1" height="1" fill="#0000ff"/>
<rect x="906" y="367" width="1" height="1" fill="#0000ff"/>
<rect x="906" y="373" width="1" height="1" fill="#0000ff"/>
<rect x="906" y="370" width="1" height="1" fill="#0000ff"/>
<rect x="906" y="376" width="1" height="1" fill="#0000ff"/>
<rect x="906" y="379" width="1" height="1" fill="#0000ff"/>
<rect x="906" y="385" width="1" height="1" fill="#0000ff"/>
<rect x="906" y="382" width="1" height="1" fill="#0000ff"/>
<rect x="906" y="388" width="1" height="1" fill="#0000ff"/>
<rect x="906" y="391" width="1" height="1" fill="#0000ff"/>
<rect x="906" y="345" width="1" height="1" fill="#0000ff"/>
<rect x="906" y="435" width="2" height="1" fill="#000080"/>
<rect x="898" y="431" width="2" height="1" fill="#000080"/>
<rect x="905" y="467" width="2" height="1" fill="#000080"/>
<rect x="917" y="412" width="2" height="1" fill="#000080"/>
<rect x="897" y="463" width="2" height="1" fill="#000080"/>
<rect x="906" y="401" width="2" height="1" fill="#000080"/>
<rect x="915" y="413" width="2" height="1" fill="#000080"/>
<rect x="892" y="428" width="2" height="1" fill="#000080"/>
<rect x="893" y="457" width="2" height="1" fill="#000080"/>
<rect x="903" y="466" width="2" height="1" fill="#000080"/>
<rect x="906" y="396" width="1" height="1" fill="#000080"/>
<rect x="916" y="440" width="2" height="1" fill="#000080"/>
<rect x="908" y="402" width="2" height="1" fill="#000080"/>
<rect x="906" y="469" width="1" height="1" fill="#000080"/>
<rect x="922" y="409" width="2" height="1" fill="#000080"/>
<rect x="891" y="458" width="2" height="1" fill="#000080"/>
<rect x="902" y="433" width="2" height="1" fill="#000080"/>
<rect x="894" y="429" width="2" height="1" fill="#000080"/>
<rect x="901" y="453" width="2" height="1" fill="#000080"/>
<rect x="893" y="424" width="2" height="1" fill="#000080"/>
<rect x="895" y="456" width="2" height="1" fill="#000080"/>
<rect x="908" y="450" width="2" height="1" fill="#000080"/>
<rect x="906" y="398" width="1" height="1" fill="#000080"/>
<rect x="896" y="430" width="2" height="1" fill="#000080"/>
<rect x="901" y="420" width="2" height="1" fill="#000080"/>
<rect x="906" y="471" width="1" height="1" fill="#000080"/>
<rect x="899" y="464" width="2" height="1" fill="#000080"/>
<rect x="920" y="442" width="2" height="1" fill="#000080"/>
<rect x="891" y="460" width="2" height="1" fill="#000080"/>
<rect x="912" y="438" width="2" height="1" fill="#000080"/>
<rect x="904" y="434" width="2" height="1" fill="#000080"/>
<rect x="910" y="449" width="2" height="1" fill="#000080"/>
<rect x="889" y="426" width="2" height="1" fill="#000080"/>
<rect x="918" y="407" width="2" height="1" fill="#000080"/>
<rect x="910" y="403" width="2" height="1" fill="#000080"/>
<rect x="903" y="452" width="2" height="1" fill="#000080"/>
<rect x="890" y="427" width="2" height="1" fill="#000080"/>
<rect x="916" y="446" width="2" height="1" fill="#000080"/>
<rect x="895" y="423" width="2" height="1" fill="#000080"/>
<rect x="893" y="461" width="2" height="1" fill="#000080"/>
<rect x="897" y="422" width="2" height="1" fill="#000080"/>
<rect x="906" y="400" width="1" height="1" fill="#000080"/>
<rect x="914" y="447" width="2" height="1" fill="#000080"/>
<rect x="906" y="473" width="1" height="1" fill="#000080"/>
<rect x="903" y="419" width="2" height="1" fill="#000080"/>
<rect x="905" y="418" width="2" height="1" fill="#000080"/>
<rect x="920" y="444" width="2" height="1" fill="#000080"/>
<rect x="913" y="414" width="2" height="1" fill="#000080"/>
<rect x="895" y="462" width="2" height="1" fill="#000080"/>
<rect x="908" y="436" width="2" height="1" fill="#000080"/>
<rect x="900" y="432" width="2" height="1" fill="#000080"/>
<rect x="922" y="443" width="2" height="1" fill="#000080"/>
<rect x="899" y="421" width="2" height="1" fill="#000080"/>
<rect x="914" y="405" width="2" height="1" fill="#000080"/>
<rect x="911" y="415" width="2" height="1" fill="#000080"/>
<rect x="889" y="459" width="2" height="1" fill="#000080"/>
<rect x="906" y="475" width="1" height="1" fill="#000080"/>
<rect x="909" y="416" width="2" height="1" fill="#000080"/>
<rect x="921" y="410" width="2" height="1" fill="#000080"/>
<rect x="919" y="411" width="2" height="1" fill="#000080"/>
<rect x="906" y="395" width="1" height="1" fill="#000080"/>
<rect x="897" y="455" width="2" height="1" fill="#000080"/>
<rect x="906" y="468" width="1" height="1" fill="#000080"/>
<rect x="918" y="441" width="2" height="1" fill="#000080"/>
<rect x="910" y="437" width="2" height="1" fill="#000080"/>
<rect x="905" y="451" width="3" height="1" fill="#000080"/>
<rect x="906" y="397" width="1" height="1" fill="#000080"/>
<rect x="901" y="465" width="2" height="1" fill="#000080"/>
<rect x="916" y="406" width="2" height="1" fill="#000080"/>
<rect x="899" y="454" width="2" height="1" fill="#000080"/>
<rect x="906" y="470" width="1" height="1" fill="#000080"/>
<rect x="912" y="448" width="2" height="1" fill="#000080"/>
<rect x="914" y="439" width="2" height="1" fill="#000080"/>
<rect x="891" y="425" width="2" height="1" fill="#000080"/>
<rect x="906" y="399" width="1" height="1" fill="#000080"/>
<rect x="918" y="445" width="2" height="1" fill="#000080"/>
<rect x="912" y="404" width="2" height="1" fill="#000080"/>
<rect x="907" y="417" width="2" height="1" fill="#000080"/>
<rect x="920" y="408" width="2" height="1" fill="#000080"/>
<rect x="906" y="472" width="1" height="1" fill="#000080"/>
<rect x="906" y="474" width="1" height="1" fill="#000080"/>
<rect x="906" y="394" width="1" height="1" fill="#000080"/>
<rect x="906" y="483" width="1" height="1" fill="#0000ff"/>
<rect x="906" y="489" width="1" height="1" fill="#0000ff"/>
<rect x="906" y="486" width="1" height="1" fill="#0000ff"/>
<rect x="906" y="492" width="1" height="1" fill="#0000ff"/>
<rect x="906" y="476" width="1" height="1" fill="#0000ff"/>
<rect x="906" y="482" width="1" height="1" fill="#0000ff"/>
<rect x="906" y="479" width="1" height="1" fill="#0000ff"/>
<rect x="906" y="485" width="1" height="1" fill="#0000ff"/>
<rect x="906" y="488" width="1" height="1" fill="#0000ff"/>
<rect x="906" y="478" width="1" height="1" fill="#0000ff"/>
<rect x="906" y="491" width="1" height="1" fill="#0000ff"/>
<rect x="906" y="481" width="1" height="1" fill="#0000ff"/>
<rect x="906" y="487" width="1" height="1" fill="#0000ff"/>
<rect x="906" y="477" width="1" height="1" fill="#0000ff"/>
<rect x="906" y="484" width="1" height="1" fill="#0000ff"/>
<rect x="906" y="490" width="1" height="1" fill="#0000ff"/>
<rect x="906" y="480" width="1" height="1" fill="#0000ff"/>
<rect x="889" y="492" width="35" height="1" fill="#0000ff"/>
<rect x="905" y="508" width="1" height="1" fill="#0000ff"/>
<rect x="907" y="508" width="1" height="1" fill="#0000ff"/>
<rect x="896" y="499" width="1" height="1" fill="#0000ff"/>
<rect x="916" y="499" width="1" height="1" fill="#0000ff"/>
<rect x="901" y="504" width="1" height="1" fill="#0000ff"/>
<rect x="911" y="504" width="1" height="1" fill="#0000ff"/>
<rect x="897" y="500" width="1" height="1" fill="#0000ff"/>
<rect x="915" y="500" width="1" height="1" fill="#0000ff"/>
<rect x="890" y="493" width="1" height="1" fill="#0000ff"/>
<rect x="922" y="493" width="1" height="1" fill="#0000ff"/>
<rect x="906" y="509" width="1" height="1" fill="#0000ff"/>
<rect x="892" y="495" width="1" height="1" fill="#0000ff"/>
<rect x="920" y="495" width="1" height="1" fill="#0000ff"/>
<rect x="898" y="501" width="1" height="1" fill="#0000ff"/>
<rect x="914" y="501" width="1" height="1" fill="#0000ff"/>
<rect x="899" y="502" width="1" height="1" fill="#0000ff"/>
<rect x="913" y="502" width="1" height="1" fill="#0000ff"/>
<rect x="891" y="494" width="1" height="1" fill="#0000ff"/>
<rect x="921" y="494" width="1" height="1" fill="#0000ff"/>
<rect x="900" y="503" width="1" height="1" fill="#0000ff"/>
<rect x="912" y="503" width="1" height="1" fill="#0000ff"/>
<rect x="902" y="505" width="1" height="1" fill="#0000ff"/>
<rect x="910" y="505" width="1" height="1" fill="#0000ff"/>
<rect x="893" y="496" width="1" height="1" fill="#0000ff"/>
<rect x="919" y="496" width="1" height="1" fill="#0000ff"/>
<rect x="903" y="506" width="1" height="1" fill="#0000ff"/>
<rect x="909" y="506" width="1" height="1" fill="#0000ff"/>
<rect x="894" y="497" width="1" height="1" fill="#0000ff"/>
<rect x="918" y="497" width="1" height="1" fill="#0000ff"/>
<rect x="904" y="507" width="1" height="1" fill="#0000ff"/>
<rect x="908" y="507" width="1" height="1" fill="#0000ff"/>
<rect x="895" y="498" width="1" height="1" fill="#0000ff"/>
<rect x="917" y="498" width="1" height="1" fill="#0000ff"/>
<rect x="1139" y="251" width="1" height="1" fill="#0000ff"/>
<rect x="1139" y="254" width="1" height="1" fill="#0000ff"/>
<rect x="1139" y="260" width="1" height="1" fill="#0000ff"/>
<rect x="1139" y="257" width="1" height="1" fill="#0000ff"/>
<rect x="1139" y="263" width="1" height="1" fill="#0000ff"/>
<rect x="1139" y="266" width="1" height="1" fill="#0000ff"/>
<rect x="1139" y="272" width="1" height="1" fill="#0000ff"/>
<rect x="1139" y="269" width="1" height="1" fill="#0000ff"/>
<rect x="1139" y="275" width="1" height="1" fill="#0000ff"/>
<rect x="1139" y="244" width="1" height="1" fill="#0000ff"/>
<rect x="1139" y="247" width="1" height="1" fill="#0000ff"/>
<rect x="1139" y="253" width="1" height="1" fill="#0000ff"/>
<rect x="1139" y="250" width="1" height="1" fill="#0000ff"/>
<rect x="1139" y="256" width="1" height="1" fill="#0000ff"/>
<rect x="1139" y="259" width="1" height="1" fill="#0000ff"/>
<rect x="1139" y="265" width="1" height="1" fill="#0000ff"/>
<rect x="1139" y="262" width="1" height="1" fill="#0000ff"/>
<rect x="1139" y="268" width="1" height="1" fill="#0000ff"/>
<rect x="1139" y="274" width="1" height="1" fill="#0000ff"/>
<rect x="1139" y="271" width="1" height="1" fill="#0000ff"/>
<rect x="1139" y="277" width="1" height="1" fill="#0000ff"/>
<rect x="1139" y="246" width="1" height="1" fill="#0000ff"/>
<rect x="1139" y="243" width="1" height="1" fill="#0000ff"/>
<rect x="1139" y="249" width="1" height="1" fill="#0000ff"/>
<rect x="1139" y="252" width="1" height="1" fill="#0000ff"/>
<rect x="1139" y="258" width="1" height="1" fill="#0000ff"/>
<rect x="1139" y="255" width="1" height="1" fill="#0000ff"/>
<rect x="1139" y="261" width="1" height="1" fill="#0000ff"/>
<rect x="1139" y="267" width="1" height="1" fill="#0000ff"/>
<rect x="1139" y="264" width="1" height="1" fill="#0000ff"/>
<rect x="1139" y="270" width="1" height="1" fill="#0000ff"/>
<rect x="1139" y="273" width="1" height="1" fill="#0000ff"/>
<rect x="1139" y="276" width="1" height="1" fill="#0000ff"/>
<rect x="1139" y="248" width="1" height="1" fill="#0000ff"/>
<rect x="1139" y="245" width="1" height="1" fill="#0000ff"/>
<rect x="1135" y="239" width="9" height="9" fill="#0000ff"/>
<rect x="1139" y="278" width="1" height="1" fill="#000080"/>
<rect x="1139" y="284" width="1" height="1" fill="#000080"/>
<rect x="1139" y="281" width="1" height="1" fill="#000080"/>
<rect x="1139" y="287" width="1" height="1" fill="#000080"/>
<rect x="1139" y="293" width="1" height="1" fill="#000080"/>
<rect x="1139" y="290" width="1" height="1" fill="#000080"/>
<rect x="1139" y="296" width="1" height="1" fill="#000080"/>
<rect x="1139" y="299" width="1" height="1" fill="#000080"/>
<rect x="1139" y="305" width="1" height="1" fill="#000080"/>
<rect x="1139" y="302" width="1" height="1" fill="#000080"/>
<rect x="1139" y="280" width="1" height="1" fill="#000080"/>
<rect x="1139" y="286" width="1" height="1" fill="#000080"/>
<rect x="1139" y="283" width="1" height="1" fill="#000080"/>
<rect x="1139" y="289" width="1" height="1" fill="#000080"/>
<rect x="1139" y="292" width="1" height="1" fill="#000080"/>
<rect x="1139" y="298" width="1" height="1" fill="#000080"/>
<rect x="1139" y="295" width="1" height="1" fill="#000080"/>
<rect x="1139" y="301" width="1" height="1" fill="#000080"/>
<rect x="1139" y="304" width="1" height="1" fill="#000080"/>
<rect x="1139" y="279" width="1" height="1" fill="#000080"/>
<rect x="1139" y="282" width="1" height="1" fill="#000080"/>
<rect x="1139" y="285" width="1" height="1" fill="#000080"/>
<rect x="1139" y="291" width="1" height="1" fill="#000080"/>
<rect x="1139" y="288" width="1" height="1" fill="#000080"/>
<rect x="1139" y="294" width="1" height="1" fill="#000080"/>
<rect x="1139" y="297" width="1" height="1" fill="#000080"/>
<rect x="1139" y="303" width="1" height="1" fill="#000080"/>
<rect x="1139" y="300" width="1" height="1" fill="#000080"/>
<rect x="1139" y="306" width="1" height="1" fill="#000080"/>
<rect x="1139" y="315" width="1" height="1" fill="#000080"/>
<rect x="1139" y="318" width="1" height="1" fill="#000080"/>
<rect x="1139" y="324" width="1" height="1" fill="#000080"/>
<rect x="1139" y="321" width="1" height="1" fill="#000080"/>
<rect x="1139" y="327" width="1" height="1" fill="#000080"/>
<rect x="1139" y="330" width="1" height="1" fill="#000080"/>
<rect x="1139" y="336" width="1" height="1" fill="#000080"/>
<rect x="1139" y="333" width="1" height="1" fill="#000080"/>
<rect x="1139" y="339" width="1" height="1" fill="#000080"/>
<rect x="1139" y="342" width="1" height="1" fill="#000080"/>
<rect x="1139" y="317" width="1" height="1" fill="#000080"/>
<rect x="1139" y="314" width="1" height="1" fill="#000080"/>
<rect x="1139" y="320" width="1" height="1" fill="#000080"/>
<rect x="1139" y="323" width="1" height="1" fill="#000080"/>
<rect x="1139" y="329" width="1" height="1" fill="#000080"/>
<rect x="1139" y="326" width="1" height="1" fill="#000080"/>
<rect x="1139" y="332" width="1" height="1" fill="#000080"/>
<rect x="1139" y="338" width="1" height="1" fill="#000080"/>
<rect x="1139" y="335" width="1" height="1" fill="#000080"/>
<rect x="1139" y="341" width="1" height="1" fill="#000080"/>
<rect x="1139" y="319" width="1" height="1" fill="#000080"/>
<rect x="1139" y="316" width="1" height="1" fill="#000080"/>
<rect x="1139" y="322" width="1" height="1" fill="#000080"/>
<rect x="1139" y="325" width="1" height="1" fill="#000080"/>
<rect x="1139" y="331" width="1" height="1" fill="#000080"/>
<rect x="1139" y="328" width="1" height="1" fill="#000080"/>
<rect x="1139" y="334" width="1" height="1" fill="#000080"/>
<rect x="1139" y="337" width="1" height="1" fill="#000080"/>
<rect x="1139" y="340" width="1" height="1" fill="#000080"/>
<rect x="1122" y="306" width="34" height="1" fill="#000080"/>
<rect x="1122" y="314" width="34" height="1" fill="#000080"/>
<rect x="1139" y="370" width="1" height="1" fill="#0000ff"/>
<rect x="1139" y="376" width="1" height="1" fill="#0000ff"/>
<rect x="1139" y="373" width="1" height="1" fill="#0000ff"/>
<rect x="1139" y="379" width="1" height="1" fill="#0000ff"/>
<rect x="1139" y="382" width="1" height="1" fill="#0000ff"/>
<rect x="1139" y="388" width="1" height="1" fill="#0000ff"/>
<rect x="1139" y="385" width="1" height="1" fill="#0000ff"/>
<rect x="1139" y="391" width="1" height="1" fill="#0000ff"/>
<rect x="1139" y="348" width="1" height="1" fill="#0000ff"/>
<rect x="1139" y="345" width="1" height="1" fill="#0000ff"/>
<rect x="1139" y="351" width="1" height="1" fill="#0000ff"/>
<rect x="1139" y="357" width="1" height="1" fill="#0000ff"/>
<rect x="1139" y="354" width="1" height="1" fill="#0000ff"/>
<rect x="1139" y="360" width="1" height="1" fill="#0000ff"/>
<rect x="1139" y="363" width="1" height="1" fill="#0000ff"/>
<rect x="1139" y="369" width="1" height="1" fill="#0000ff"/>
<rect x="1139" y="366" width="1" height="1" fill="#0000ff"/>
<rect x="1139" y="372" width="1" height="1" fill="#0000ff"/>
<rect x="1139" y="375" width="1" height="1" fill="#0000ff"/>
<rect x="1139" y="381" width="1" height="1" fill="#0000ff"/>
<rect x="1139" y="378" width="1" height="1" fill="#0000ff"/>
<rect x="1139" y="384" width="1" height="1" fill="#0000ff"/>
<rect x="1139" y="387" width="1" height="1" fill="#0000ff"/>
<rect x="1139" y="393" width="1" height="1" fill="#0000ff"/>
<rect x="1139" y="390" width="1" height="1" fill="#0000ff"/>
<rect x="1139" y="344" width="1" height="1" fill="#0000ff"/>
<rect x="1139" y="350" width="1" height="1" fill="#0000ff"/>
<rect x="1139" y="347" width="1" height="1" fill="#0000ff"/>
<rect x="1139" y="353" width="1" height="1" fill="#0000ff"/>
<rect x="1139" y="356" width="1" height="1" fill="#0000ff"/>
<rect x="1139" y="362" width="1" height="1" fill="#0000ff"/>
<rect x="1139" y="359" width="1" height="1" fill="#0000ff"/>
<rect x="1139" y="365" width="1" height="1" fill="#0000ff"/>
<rect x="1139" y="368" width="1" height="1" fill="#0000ff"/>
<rect x="1139" y="374" width="1" height="1" fill="#0000ff"/>
<rect x="1139" y="371" width="1" height="1" fill="#0000ff"/>
<rect x="1139" y="377" width="1" height="1" fill="#0000ff"/>
<rect x="1139" y="383" width="1" height="1" fill="#0000ff"/>
<rect x="1139" y="380" width="1" height="1" fill="#0000ff"/>
<rect x="1139" y="386" width="1" height="1" fill="#0000ff"/>
<rect x="1139" y="389" width="1" height="1" fill="#0000ff"/>
<rect x="1139" y="392" width="1" height="1" fill="#0000ff"/>
<rect x="1139" y="343" width="1" height="1" fill="#0000ff"/>
<rect x="1139" y="346" width="1" height="1" fill="#0000ff"/>
<rect x="1139" y="349" width="1" height="1" fill="#0000ff"/>
<rect x="1139" y="355" width="1" height="1" fill="#0000ff"/>
<rect x="1139" y="352" width="1" height="1" fill="#0000ff"/>
<rect x="1139" y="358" width="1" height="1" fill="#0000ff"/>
<rect x="1139" y="364" width="1" height="1" fill="#0000ff"/>
<rect x="1139" y="361" width="1" height="1" fill="#0000ff"/>
<rect x="1139" y="367" width="1" height="1" fill="#0000ff"/>
<rect x="1132" y="454" width="2" height="1" fill="#000080"/>
<rect x="1134" y="453" width="2" height="1" fill="#000080"/>
<rect x="1125" y="424" width="2" height="1" fill="#000080"/>
<rect x="1127" y="423" width="2" height="1" fill="#000080"/>
<rect x="1153" y="442" width="2" height="1" fill="#000080"/>
<rect x="1139" y="397" width="1" height="1" fill="#000080"/>
<rect x="1144" y="448" width="2" height="1" fill="#000080"/>
<rect x="1133" y="420" width="2" height="1" fill="#000080"/>
<rect x="1139" y="470" width="1" height="1" fill="#000080"/>
<rect x="1150" y="445" width="2" height="1" fill="#000080"/>
<rect x="1142" y="449" width="2" height="1" fill="#000080"/>
<rect x="1122" y="426" width="1" height="1" fill="#000080"/>
<rect x="1150" y="407" width="2" height="1" fill="#000080"/>
<rect x="1142" y="403" width="2" height="1" fill="#000080"/>
<rect x="1152" y="444" width="2" height="1" fill="#000080"/>
<rect x="1129" y="422" width="2" height="1" fill="#000080"/>
<rect x="1145" y="438" width="2" height="1" fill="#000080"/>
<rect x="1139" y="399" width="1" height="1" fill="#000080"/>
<rect x="1146" y="447" width="2" height="1" fill="#000080"/>
<rect x="1137" y="418" width="2" height="1" fill="#000080"/>
<rect x="1139" y="472" width="1" height="1" fill="#000080"/>
<rect x="1139" y="417" width="2" height="1" fill="#000080"/>
<rect x="1151" y="411" width="2" height="1" fill="#000080"/>
<rect x="1145" y="414" width="2" height="1" fill="#000080"/>
<rect x="1149" y="412" width="2" height="1" fill="#000080"/>
<rect x="1125" y="428" width="2" height="1" fill="#000080"/>
<rect x="1154" y="443" width="2" height="1" fill="#000080"/>
<rect x="1146" y="405" width="2" height="1" fill="#000080"/>
<rect x="1128" y="456" width="2" height="1" fill="#000080"/>
<rect x="1139" y="401" width="1" height="1" fill="#000080"/>
<rect x="1147" y="413" width="2" height="1" fill="#000080"/>
<rect x="1149" y="440" width="2" height="1" fill="#000080"/>
<rect x="1139" y="474" width="1" height="1" fill="#000080"/>
<rect x="1141" y="436" width="2" height="1" fill="#000080"/>
<rect x="1141" y="416" width="2" height="1" fill="#000080"/>
<rect x="1133" y="432" width="2" height="1" fill="#000080"/>
<rect x="1153" y="410" width="2" height="1" fill="#000080"/>
<rect x="1140" y="402" width="2" height="1" fill="#000080"/>
<rect x="1122" y="459" width="2" height="1" fill="#000080"/>
<rect x="1124" y="458" width="2" height="1" fill="#000080"/>
<rect x="1135" y="433" width="2" height="1" fill="#000080"/>
<rect x="1127" y="429" width="2" height="1" fill="#000080"/>
<rect x="1139" y="394" width="1" height="1" fill="#000080"/>
<rect x="1148" y="406" width="2" height="1" fill="#000080"/>
<rect x="1130" y="455" width="2" height="1" fill="#000080"/>
<rect x="1138" y="467" width="2" height="1" fill="#000080"/>
<rect x="1123" y="425" width="2" height="1" fill="#000080"/>
<rect x="1151" y="441" width="2" height="1" fill="#000080"/>
<rect x="1143" y="437" width="2" height="1" fill="#000080"/>
<rect x="1140" y="450" width="2" height="1" fill="#000080"/>
<rect x="1137" y="434" width="2" height="1" fill="#000080"/>
<rect x="1129" y="430" width="2" height="1" fill="#000080"/>
<rect x="1132" y="464" width="2" height="1" fill="#000080"/>
<rect x="1124" y="460" width="2" height="1" fill="#000080"/>
<rect x="1138" y="451" width="2" height="1" fill="#000080"/>
<rect x="1139" y="396" width="1" height="1" fill="#000080"/>
<rect x="1131" y="421" width="2" height="1" fill="#000080"/>
<rect x="1136" y="452" width="2" height="1" fill="#000080"/>
<rect x="1139" y="469" width="1" height="1" fill="#000080"/>
<rect x="1131" y="431" width="2" height="1" fill="#000080"/>
<rect x="1123" y="427" width="2" height="1" fill="#000080"/>
<rect x="1152" y="408" width="2" height="1" fill="#000080"/>
<rect x="1148" y="446" width="2" height="1" fill="#000080"/>
<rect x="1144" y="404" width="2" height="1" fill="#000080"/>
<rect x="1134" y="465" width="2" height="1" fill="#000080"/>
<rect x="1126" y="461" width="2" height="1" fill="#000080"/>
<rect x="1147" y="439" width="2" height="1" fill="#000080"/>
<rect x="1135" y="419" width="2" height="1" fill="#000080"/>
<rect x="1139" y="435" width="2" height="1" fill="#000080"/>
<rect x="1139" y="398" width="1" height="1" fill="#000080"/>
<rect x="1128" y="462" width="2" height="1" fill="#000080"/>
<rect x="1139" y="471" width="1" height="1" fill="#000080"/>
<rect x="1143" y="415" width="2" height="1" fill="#000080"/>
<rect x="1136" y="466" width="2" height="1" fill="#000080"/>
<rect x="1130" y="463" width="2" height="1" fill="#000080"/>
<rect x="1139" y="400" width="1" height="1" fill="#000080"/>
<rect x="1139" y="473" width="1" height="1" fill="#000080"/>
<rect x="1154" y="409" width="2" height="1" fill="#000080"/>
<rect x="1126" y="457" width="2" height="1" fill="#000080"/>
<rect x="1139" y="395" width="1" height="1" fill="#000080"/>
<rect x="1139" y="475" width="1" height="1" fill="#000080"/>
<rect x="1139" y="468" width="1" height="1" fill="#000080"/>
<rect x="1139" y="476" width="1" height="1" fill="#0000ff"/>
<rect x="1139" y="489" width="1" height="1" fill="#0000ff"/>
<rect x="1139" y="479" width="1" height="1" fill="#0000ff"/>
<rect x="1139" y="485" width="1" height="1" fill="#0000ff"/>
<rect x="1139" y="482" width="1" height="1" fill="#0000ff"/>
<rect x="1139" y="488" width="1" height="1" fill="#0000ff"/>
<rect x="1139" y="478" width="1" height="1" fill="#0000ff"/>
<rect x="1139" y="491" width="1" height="1" fill="#0000ff"/>
<rect x="1139" y="481" width="1" height="1" fill="#0000ff"/>
<rect x="1139" y="484" width="1" height="1" fill="#0000ff"/>
<rect x="1139" y="490" width="1" height="1" fill="#0000ff"/>
<rect x="1139" y="487" width="1" height="1" fill="#0000ff"/>
<rect x="1139" y="477" width="1" height="1" fill="#0000ff"/>
<rect x="1139" y="483" width="1" height="1" fill="#0000ff"/>
<rect x="1139" y="480" width="1" height="1" fill="#0000ff"/>
<rect x="1139" y="486" width="1" height="1" fill="#0000ff"/>
<rect x="1139" y="492" width="1" height="1" fill="#0000ff"/>
<rect x="1122" y="492" width="34" height="1" fill="#0000ff"/>
<rect x="1133" y="503" width="1" height="1" fill="#0000ff"/>
<rect x="1145" y="503" width="1" height="1" fill="#0000ff"/>
<rect x="1128" y="498" width="1" height="1" fill="#0000ff"/>
<rect x="1149" y="498" width="1" height="1" fill="#0000ff"/>
<rect x="1125" y="495" width="1" height="1" fill="#0000ff"/>
<rect x="1152" y="495" width="1" height="1" fill="#0000ff"/>
<rect x="1124" y="494" width="1" height="1" fill="#0000ff"/>
<rect x="1153" y="494" width="1" height="1" fill="#0000ff"/>
<rect x="1138" y="508" width="1" height="1" fill="#0000ff"/>
<rect x="1140" y="508" width="1" height="1" fill="#0000ff"/>
<rect x="1137" y="507" width="1" height="1" fill="#0000ff"/>
<rect x="1141" y="507" width="1" height="1" fill="#0000ff"/>
<rect x="1129" y="499" width="1" height="1" fill="#0000ff"/>
<rect x="1148" y="499" width="1" height="1" fill="#0000ff"/>
<rect x="1127" y="497" width="1" height="1" fill="#0000ff"/>
<rect x="1150" y="497" width="1" height="1" fill="#0000ff"/>
<rect x="1126" y="496" width="1" height="1" fill="#0000ff"/>
<rect x="1151" y="496" width="1" height="1" fill="#0000ff"/>
<rect x="1134" y="504" width="1" height="1" fill="#0000ff"/>
<rect x="1144" y="504" width="1" height="1" fill="#0000ff"/>
<rect x="1131" y="501" width="1" height="1" fill="#0000ff"/>
<rect x="1147" y="501" width="1" height="1" fill="#0000ff"/>
<rect x="1139" y="509" width="1" height="1" fill="#0000ff"/>
<rect x="1130" y="500" width="1" height="1" fill="#0000ff"/>
<rect x="1147" y="500" width="1" height="1" fill="#0000ff"/>
<rect x="1132" y="502" width="1" height="1" fill="#0000ff"/>
<rect x="1146" y="502" width="1" height="1" fill="#0000ff"/>
<rect x="1135" y="505" width="1" height="1" fill="#0000ff"/>
<rect x="1143" y="505" width="1" height="1" fill="#0000ff"/>
<rect x="1123" y="493" width="1" height="1" fill="#0000ff"/>
<rect x="1154" y="493" width="1" height="1" fill="#0000ff"/>
<rect x="1136" y="506" width="1" height="1" fill="#0000ff"/>
<rect x="1142" y="506" width="1" height="1" fill="#0000ff"/>
<rect x="1238" y="306" width="1" height="1" fill="#000080"/>
<rect x="1238" y="278" width="1" height="1" fill="#000080"/>
<rect x="1238" y="281" width="1" height="1" fill="#000080"/>
<rect x="1238" y="284" width="1" height="1" fill="#000080"/>
<rect x="1238" y="290" width="1" height="1" fill="#000080"/>
<rect x="1238" y="287" width="1" height="1" fill="#000080"/>
<rect x="1238" y="293" width="1" height="1" fill="#000080"/>
<rect x="1238" y="296" width="1" height="1" fill="#000080"/>
<rect x="1238" y="302" width="1" height="1" fill="#000080"/>
<rect x="1238" y="299" width="1" height="1" fill="#000080"/>
<rect x="1238" y="305" width="1" height="1" fill="#000080"/>
<rect x="1238" y="283" width="1" height="1" fill="#000080"/>
<rect x="1238" y="280" width="1" height="1" fill="#000080"/>
<rect x="1238" y="286" width="1" height="1" fill="#000080"/>
<rect x="1238" y="289" width="1" height="1" fill="#000080"/>
<rect x="1238" y="295" width="1" height="1" fill="#000080"/>
<rect x="1238" y="292" width="1" height="1" fill="#000080"/>
<rect x="1238" y="298" width="1" height="1" fill="#000080"/>
<rect x="1238" y="304" width="1" height="1" fill="#000080"/>
<rect x="1238" y="301" width="1" height="1" fill="#000080"/>
<rect x="1238" y="279" width="1" height="1" fill="#000080"/>
<rect x="1238" y="285" width="1" height="1" fill="#000080"/>
<rect x="1238" y="282" width="1" height="1" fill="#000080"/>
<rect x="1238" y="288" width="1" height="1" fill="#000080"/>
<rect x="1238" y="291" width="1" height="1" fill="#000080"/>
<rect x="1238" y="297" width="1" height="1" fill="#000080"/>
<rect x="1238" y="294" width="1" height="1" fill="#000080"/>
<rect x="1238" y="300" width="1" height="1" fill="#000080"/>
<rect x="1238" y="303" width="1" height="1" fill="#000080"/>
<rect x="1238" y="315" width="1" height="1" fill="#000080"/>
<rect x="1238" y="321" width="1" height="1" fill="#000080"/>
<rect x="1238" y="318" width="1" height="1" fill="#000080"/>
<rect x="1238" y="324" width="1" height="1" fill="#000080"/>
<rect x="1238" y="330" width="1" height="1" fill="#000080"/>
<rect x="1238" y="327" width="1" height="1" fill="#000080"/>
<rect x="1238" y="333" width="1" height="1" fill="#000080"/>
<rect x="1238" y="336" width="1" height="1" fill="#000080"/>
<rect x="1238" y="342" width="1" height="1" fill="#000080"/>
<rect x="1238" y="339" width="1" height="1" fill="#000080"/>
<rect x="1238" y="314" width="1" height="1" fill="#000080"/>
<rect x="1238" y="317" width="1" height="1" fill="#000080"/>
<rect x="1238" y="323" width="1" height="1" fill="#000080"/>
<rect x="1238" y="320" width="1" height="1" fill="#000080"/>
<rect x="1238" y="326" width="1" height="1" fill="#000080"/>
<rect x="1238" y="329" width="1" height="1" fill="#000080"/>
<rect x="1238" y="335" width="1" height="1" fill="#000080"/>
<rect x="1238" y="332" width="1" height="1" fill="#000080"/>
<rect x="1238" y="338" width="1" height="1" fill="#000080"/>
<rect x="1238" y="341" width="1" height="1" fill="#000080"/>
<rect x="1238" y="316" width="1" height="1" fill="#000080"/>
<rect x="1238" y="319" width="1" height="1" fill="#000080"/>
<rect x="1238" y="322" width="1" height="1" fill="#000080"/>
<rect x="1238" y="328" width="1" height="1" fill="#000080"/>
<rect x="1238" y="325" width="1" height="1" fill="#000080"/>
<rect x="1238" y="331" width="1" height="1" fill="#000080"/>
<rect x="1238" y="334" width="1" height="1" fill="#000080"/>
<rect x="1238" y="340" width="1" height="1" fill="#000080"/>
<rect x="1238" y="337" width="1" height="1" fill="#000080"/>
<rect x="1222" y="306" width="34" height="1" fill="#000080"/>
<rect x="1222" y="314" width="34" height="1" fill="#000080"/>
<rect x="1238" y="367" width="1" height="1" fill="#0000ff"/>
<rect x="1238" y="373" width="1" height="1" fill="#0000ff"/>
<rect x="1238" y="370" width="1" height="1" fill="#0000ff"/>
<rect x="1238" y="376" width="1" height="1" fill="#0000ff"/>
<rect x="1238" y="379" width="1" height="1" fill="#0000ff"/>
<rect x="1238" y="385" width="1" height="1" fill="#0000ff"/>
<rect x="1238" y="382" width="1" height="1" fill="#0000ff"/>
<rect x="1238" y="388" width="1" height="1" fill="#0000ff"/>
<rect x="1238" y="391" width="1" height="1" fill="#0000ff"/>
<rect x="1238" y="345" width="1" height="1" fill="#0000ff"/>
<rect x="1238" y="348" width="1" height="1" fill="#0000ff"/>
<rect x="1238" y="354" width="1" height="1" fill="#0000ff"/>
<rect x="1238" y="351" width="1" height="1" fill="#0000ff"/>
<rect x="1238" y="357" width="1" height="1" fill="#0000ff"/>
<rect x="1238" y="360" width="1" height="1" fill="#0000ff"/>
<rect x="1238" y="366" width="1" height="1" fill="#0000ff"/>
<rect x="1238" y="363" width="1" height="1" fill="#0000ff"/>
<rect x="1238" y="369" width="1" height="1" fill="#0000ff"/>
<rect x="1238" y="375" width="1" height="1" fill="#0000ff"/>
<rect x="1238" y="372" width="1" height="1" fill="#0000ff"/>
<rect x="1238" y="378" width="1" height="1" fill="#0000ff"/>
<rect x="1238" y="381" width="1" height="1" fill="#0000ff"/>
<rect x="1238" y="387" width="1" height="1" fill="#0000ff"/>
<rect x="1238" y="384" width="1" height="1" fill="#0000ff"/>
<rect x="1238" y="390" width="1" height="1" fill="#0000ff"/>
<rect x="1238" y="393" width="1" height="1" fill="#0000ff"/>
<rect x="1238" y="347" width="1" height="1" fill="#0000ff"/>
<rect x="1238" y="344" width="1" height="1" fill="#0000ff"/>
<rect x="1238" y="350" width="1" height="1" fill="#0000ff"/>
<rect x="1238" y="356" width="1" height="1" fill="#0000ff"/>
<rect x="1238" y="353" width="1" height="1" fill="#0000ff"/>
<rect x="1238" y="359" width="1" height="1" fill="#0000ff"/>
<rect x="1238" y="362" width="1" height="1" fill="#0000ff"/>
<rect x="1238" y="368" width="1" height="1" fill="#0000ff"/>
<rect x="1238" y="365" width="1" height="1" fill="#0000ff"/>
<rect x="1238" y="371" width="1" height="1" fill="#0000ff"/>
<rect x="1238" y="374" width="1" height="1" fill="#0000ff"/>
<rect x="1238" y="380" width="1" height="1" fill="#0000ff"/>
<rect x="1238" y="377" width="1" height="1" fill="#0000ff"/>
<rect x="1238" y="383" width="1" height="1" fill="#0000ff"/>
<rect x="1238" y="386" width="1" height="1" fill="#0000ff"/>
<rect x="1238" y="392" width="1" height="1" fill="#0000ff"/>
<rect x="1238" y="389" width="1" height="1" fill="#0000ff"/>
<rect x="1238" y="343" width="1" height="1" fill="#0000ff"/>
<rect x="1238" y="349" width="1" height="1" fill="#0000ff"/>
<rect x="1238" y="346" width="1" height="1" fill="#0000ff"/>
<rect x="1238" y="352" width="1" height="1" fill="#0000ff"/>
<rect x="1238" y="355" width="1" height="1" fill="#0000ff"/>
<rect x="1238" y="361" width="1" height="1" fill="#0000ff"/>
<rect x="1238" y="358" width="1" height="1" fill="#0000ff"/>
<rect x="1238" y="364" width="1" height="1" fill="#0000ff"/>
<rect x="1241" y="416" width="2" height="1" fill="#000080"/>
<rect x="1243" y="415" width="2" height="1" fill="#000080"/>
<rect x="1249" y="440" width="2" height="1" fill="#000080"/>
<rect x="1233" y="465" width="2" height="1" fill="#000080"/>
<rect x="1253" y="410" width="2" height="1" fill="#000080"/>
<rect x="1238" y="400" width="1" height="1" fill="#000080"/>
<rect x="1227" y="429" width="2" height="1" fill="#000080"/>
<rect x="1238" y="473" width="1" height="1" fill="#000080"/>
<rect x="1237" y="418" width="2" height="1" fill="#000080"/>
<rect x="1223" y="460" width="2" height="1" fill="#000080"/>
<rect x="1228" y="456" width="2" height="1" fill="#000080"/>
<rect x="1238" y="401" width="2" height="1" fill="#000080"/>
<rect x="1247" y="413" width="2" height="1" fill="#000080"/>
<rect x="1233" y="432" width="2" height="1" fill="#000080"/>
<rect x="1225" y="428" width="2" height="1" fill="#000080"/>
<rect x="1254" y="409" width="2" height="1" fill="#000080"/>
<rect x="1226" y="457" width="2" height="1" fill="#000080"/>
<rect x="1237" y="467" width="2" height="1" fill="#000080"/>
<rect x="1229" y="463" width="2" height="1" fill="#000080"/>
<rect x="1238" y="475" width="1" height="1" fill="#000080"/>
<rect x="1248" y="406" width="2" height="1" fill="#000080"/>
<rect x="1244" y="448" width="2" height="1" fill="#000080"/>
<rect x="1223" y="425" width="2" height="1" fill="#000080"/>
<rect x="1251" y="441" width="2" height="1" fill="#000080"/>
<rect x="1243" y="437" width="2" height="1" fill="#000080"/>
<rect x="1238" y="395" width="1" height="1" fill="#000080"/>
<rect x="1238" y="468" width="1" height="1" fill="#000080"/>
<rect x="1229" y="430" width="2" height="1" fill="#000080"/>
<rect x="1222" y="426" width="1" height="1" fill="#000080"/>
<rect x="1250" y="407" width="2" height="1" fill="#000080"/>
<rect x="1242" y="403" width="2" height="1" fill="#000080"/>
<rect x="1238" y="451" width="2" height="1" fill="#000080"/>
<rect x="1225" y="461" width="2" height="1" fill="#000080"/>
<rect x="1253" y="442" width="2" height="1" fill="#000080"/>
<rect x="1229" y="422" width="2" height="1" fill="#000080"/>
<rect x="1231" y="421" width="2" height="1" fill="#000080"/>
<rect x="1245" y="438" width="2" height="1" fill="#000080"/>
<rect x="1237" y="434" width="2" height="1" fill="#000080"/>
<rect x="1246" y="447" width="2" height="1" fill="#000080"/>
<rect x="1248" y="446" width="2" height="1" fill="#000080"/>
<rect x="1244" y="404" width="2" height="1" fill="#000080"/>
<rect x="1239" y="417" width="2" height="1" fill="#000080"/>
<rect x="1238" y="397" width="1" height="1" fill="#000080"/>
<rect x="1247" y="439" width="2" height="1" fill="#000080"/>
<rect x="1238" y="470" width="1" height="1" fill="#000080"/>
<rect x="1239" y="435" width="2" height="1" fill="#000080"/>
<rect x="1231" y="431" width="2" height="1" fill="#000080"/>
<rect x="1249" y="412" width="2" height="1" fill="#000080"/>
<rect x="1252" y="408" width="2" height="1" fill="#000080"/>
<rect x="1254" y="443" width="2" height="1" fill="#000080"/>
<rect x="1246" y="405" width="2" height="1" fill="#000080"/>
<rect x="1233" y="420" width="2" height="1" fill="#000080"/>
<rect x="1252" y="444" width="2" height="1" fill="#000080"/>
<rect x="1241" y="436" width="2" height="1" fill="#000080"/>
<rect x="1238" y="399" width="1" height="1" fill="#000080"/>
<rect x="1235" y="466" width="2" height="1" fill="#000080"/>
<rect x="1245" y="414" width="2" height="1" fill="#000080"/>
<rect x="1240" y="402" width="2" height="1" fill="#000080"/>
<rect x="1251" y="411" width="2" height="1" fill="#000080"/>
<rect x="1222" y="459" width="2" height="1" fill="#000080"/>
<rect x="1224" y="458" width="2" height="1" fill="#000080"/>
<rect x="1235" y="433" width="2" height="1" fill="#000080"/>
<rect x="1230" y="455" width="2" height="1" fill="#000080"/>
<rect x="1240" y="450" width="2" height="1" fill="#000080"/>
<rect x="1231" y="464" width="2" height="1" fill="#000080"/>
<rect x="1234" y="453" width="2" height="1" fill="#000080"/>
<rect x="1236" y="452" width="2" height="1" fill="#000080"/>
<rect x="1238" y="394" width="1" height="1" fill="#000080"/>
<rect x="1223" y="427" width="2" height="1" fill="#000080"/>
<rect x="1225" y="424" width="2" height="1" fill="#000080"/>
<rect x="1227" y="423" width="2" height="1" fill="#000080"/>
<rect x="1242" y="449" width="2" height="1" fill="#000080"/>
<rect x="1235" y="419" width="2" height="1" fill="#000080"/>
<rect x="1227" y="462" width="2" height="1" fill="#000080"/>
<rect x="1250" y="445" width="2" height="1" fill="#000080"/>
<rect x="1238" y="472" width="1" height="1" fill="#000080"/>
<rect x="1238" y="474" width="1" height="1" fill="#000080"/>
<rect x="1232" y="454" width="2" height="1" fill="#000080"/>
<rect x="1238" y="396" width="1" height="1" fill="#000080"/>
<rect x="1238" y="469" width="1" height="1" fill="#000080"/>
<rect x="1238" y="398" width="1" height="1" fill="#000080"/>
<rect x="1238" y="471" width="1" height="1" fill="#000080"/>
<rect x="1238" y="486" width="1" height="1" fill="#0000ff"/>
<rect x="1238" y="492" width="1" height="1" fill="#0000ff"/>
<rect x="1238" y="476" width="1" height="1" fill="#0000ff"/>
<rect x="1238" y="482" width="1" height="1" fill="#0000ff"/>
<rect x="1238" y="479" width="1" height="1" fill="#0000ff"/>
<rect x="1238" y="485" width="1" height="1" fill="#0000ff"/>
<rect x="1238" y="491" width="1" height="1" fill="#0000ff"/>
<rect x="1238" y="488" width="1" height="1" fill="#0000ff"/>
<rect x="1238" y="478" width="1" height="1" fill="#0000ff"/>
<rect x="1238" y="484" width="1" height="1" fill="#0000ff"/>
<rect x="1238" y="481" width="1" height="1" fill="#0000ff"/>
<rect x="1238" y="487" width="1" height="1" fill="#0000ff"/>
<rect x="1238" y="477" width="1" height="1" fill="#0000ff"/>
<rect x="1238" y="490" width="1" height="1" fill="#0000ff"/>
<rect x="1238" y="480" width="1" height="1" fill="#0000ff"/>
<rect x="1238" y="483" width="1" height="1" fill="#0000ff"/>
<rect x="1238" y="489" width="1" height="1" fill="#0000ff"/>
<rect x="1222" y="492" width="34" height="1" fill="#0000ff"/>
<rect x="1236" y="507" width="1" height="1" fill="#0000ff"/>
<rect x="1240" y="507" width="1" height="1" fill="#0000ff"/>
<rect x="1228" y="498" width="1" height="1" fill="#0000ff"/>
<rect x="1249" y="498" width="1" height="1" fill="#0000ff"/>
<rect x="1237" y="508" width="1" height="1" fill="#0000ff"/>
<rect x="1239" y="508" width="1" height="1" fill="#0000ff"/>
<rect x="1232" y="503" width="1" height="1" fill="#0000ff"/>
<rect x="1244" y="503" width="1" height="1" fill="#0000ff"/>
<rect x="1226" y="496" width="1" height="1" fill="#0000ff"/>
<rect x="1251" y="496" width="1" height="1" fill="#0000ff"/>
<rect x="1229" y="499" width="1" height="1" fill="#0000ff"/>
<rect x="1248" y="499" width="1" height="1" fill="#0000ff"/>
<rect x="1230" y="500" width="1" height="1" fill="#0000ff"/>
<rect x="1247" y="500" width="1" height="1" fill="#0000ff"/>
<rect x="1223" y="493" width="1" height="1" fill="#0000ff"/>
<rect x="1254" y="493" width="1" height="1" fill="#0000ff"/>
<rect x="1233" y="504" width="1" height="1" fill="#0000ff"/>
<rect x="1243" y="504" width="1" height="1" fill="#0000ff"/>
<rect x="1230" y="501" width="1" height="1" fill="#0000ff"/>
<rect x="1246" y="501" width="1" height="1" fill="#0000ff"/>
<rect x="1227" y="497" width="1" height="1" fill="#0000ff"/>
<rect x="1250" y="497" width="1" height="1" fill="#0000ff"/>
<rect x="1238" y="509" width="1" height="1" fill="#0000ff"/>
<rect x="1234" y="505" width="1" height="1" fill="#0000ff"/>
<rect x="1242" y="505" width="1" height="1" fill="#0000ff"/>
<rect x="1224" y="494" width="1" height="1" fill="#0000ff"/>
<rect x="1253" y="494" width="1" height="1" fill="#0000ff"/>
<rect x="1231" y="502" width="1" height="1" fill="#0000ff"/>
<rect x="1245" y="502" width="1" height="1" fill="#0000ff"/>
<rect x="1235" y="506" width="1" height="1" fill="#0000ff"/>
<rect x="1241" y="506" width="1" height="1" fill="#0000ff"/>
<rect x="1225" y="495" width="1" height="1" fill="#0000ff"/>
<rect x="1252" y="495" width="1" height="1" fill="#0000ff"/>
<rect x="1041" y="210" width="1" height="1" fill="#000080"/>
<rect x="1042" y="210" width="1" height="1" fill="#000080"/>
<rect x="1043" y="210" width="1" height="1" fill="#000080"/>
<rect x="1044" y="210" width="1" height="1" fill="#000080"/>
<rect x="1045" y="210" width="1" height="1" fill="#000080"/>
<rect x="1046" y="210" width="1" height="1" fill="#000080"/>
<rect x="1047" y="210" width="1" height="1" fill="#000080"/>
<rect x="1048" y="210" width="1" height="1" fill="#000080"/>
<rect x="1049" y="210" width="1" height="1" fill="#000080"/>
<rect x="1050" y="210" width="1" height="1" fill="#000080"/>
<rect x="1051" y="210" width="1" height="1" fill="#000080"/>
<rect x="1052" y="210" width="1" height="1" fill="#000080"/>
<rect x="1037" y="211" width="1" height="1" fill="#000080"/>
<rect x="1038" y="211" width="1" height="1" fill="#000080"/>
<rect x="1039" y="211" width="1" height="1" fill="#000080"/>
<rect x="1040" y="211" width="1" height="1" fill="#000080"/>
<rect x="1053" y="211" width="1" height="1" fill="#000080"/>
<rect x="1054" y="211" width="1" height="1" fill="#000080"/>
<rect x="1055" y="211" width="1" height="1" fill="#000080"/>
<rect x="1056" y="211" width="1" height="1" fill="#000080"/>
<rect x="1034" y="212" width="1" height="1" fill="#000080"/>
<rect x="1035" y="212" width="1" height="1" fill="#000080"/>
<rect x="1036" y="212" width="1" height="1" fill="#000080"/>
<rect x="1057" y="212" width="1" height="1" fill="#000080"/>
<rect x="1058" y="212" width="1" height="1" fill="#000080"/>
<rect x="1059" y="212" width="1" height="1" fill="#000080"/>
<rect x="1032" y="213" width="1" height="1" fill="#000080"/>
<rect x="1033" y="213" width="1" height="1" fill="#000080"/>
<rect x="1060" y="213" width="1" height="1" fill="#000080"/>
<rect x="1061" y="213" width="1" height="1" fill="#000080"/>
<rect x="1030" y="214" width="1" height="1" fill="#000080"/>
<rect x="1031" y="214" width="1" height="1" fill="#000080"/>
<rect x="1062" y="214" width="1" height="1" fill="#000080"/>
<rect x="1063" y="214" width="1" height="1" fill="#000080"/>
<rect x="1029" y="215" width="1" height="1" fill="#000080"/>
<rect x="1064" y="215" width="1" height="1" fill="#000080"/>
<rect x="1027" y="216" width="1" height="1" fill="#000080"/>
<rect x="1028" y="216" width="1" height="1" fill="#000080"/>
<rect x="1065" y="216" width="1" height="1" fill="#000080"/>
<rect x="1066" y="216" width="1" height="1" fill="#000080"/>
<rect x="1026" y="217" width="1" height="1" fill="#000080"/>
<rect x="1067" y="217" width="1" height="1" fill="#000080"/>
<rect x="1025" y="218" width="1" height="1" fill="#000080"/>
<rect x="1068" y="218" width="1" height="1" fill="#000080"/>
<rect x="1024" y="219" width="1" height="1" fill="#000080"/>
<rect x="1069" y="219" width="1" height="1" fill="#000080"/>
<rect x="1023" y="220" width="1" height="1" fill="#000080"/>
<rect x="1070" y="220" width="1" height="1" fill="#000080"/>
<rect x="1022" y="221" width="1" height="1" fill="#000080"/>
<rect x="1071" y="221" width="1" height="1" fill="#000080"/>
<rect x="1021" y="222" width="1" height="1" fill="#000080"/>
<rect x="1072" y="222" width="1" height="1" fill="#000080"/>
<rect x="1021" y="223" width="1" height="1" fill="#000080"/>
<rect x="1072" y="223" width="1" height="1" fill="#000080"/>
<rect x="1020" y="224" width="1" height="1" fill="#000080"/>
<rect x="1073" y="224" width="1" height="1" fill="#000080"/>
<rect x="1019" y="225" width="1" height="1" fill="#000080"/>
<rect x="1074" y="225" width="1" height="1" fill="#000080"/>
<rect x="1019" y="226" width="1" height="1" fill="#000080"/>
<rect x="1074" y="226" width="1" height="1" fill="#000080"/>
<rect x="1018" y="227" width="1" height="1" fill="#000080"/>
<rect x="1075" y="227" width="1" height="1" fill="#000080"/>
<rect x="1017" y="228" width="1" height="1" fill="#000080"/>
<rect x="1076" y="228" width="1" height="1" fill="#000080"/>
<rect x="1017" y="229" width="1" height="1" fill="#000080"/>
<rect x="1076" y="229" width="1" height="1" fill="#000080"/>
<rect x="1017" y="230" width="1" height="1" fill="#000080"/>
<rect x="1076" y="230" width="1" height="1" fill="#000080"/>
<rect x="1016" y="231" width="1" height="1" fill="#000080"/>
<rect x="1077" y="231" width="1" height="1" fill="#000080"/>
<rect x="1016" y="232" width="1" height="1" fill="#000080"/>
<rect x="1077" y="232" width="1" height="1" fill="#000080"/>
<rect x="1016" y="233" width="1" height="1" fill="#000080"/>
<rect x="1077" y="233" width="1" height="1" fill="#000080"/>
<rect x="1015" y="234" width="1" height="1" fill="#000080"/>
<rect x="1078" y="234" width="1" height="1" fill="#000080"/>
<rect x="1015" y="235" width="1" height="1" fill="#000080"/>
<rect x="1078" y="235" width="1" height="1" fill="#000080"/>
<rect x="1015" y="236" width="1" height="1" fill="#000080"/>
<rect x="1078" y="236" width="1" height="1" fill="#000080"/>
<rect x="1015" y="237" width="1" height="1" fill="#000080"/>
<rect x="1078" y="237" width="1" height="1" fill="#000080"/>
<rect x="1014" y="238" width="1" height="1" fill="#000080"/>
<rect x="1079" y="238" width="1" height="1" fill="#000080"/>
<rect x="1014" y="239" width="1" height="1" fill="#000080"/>
<rect x="1079" y="239" width="1" height="1" fill="#000080"/>
<rect x="1014" y="240" width="1" height="1" fill="#000080"/>
<rect x="1079" y="240" width="1" height="1" fill="#000080"/>
<rect x="1014" y="241" width="1" height="1" fill="#000080"/>
<rect x="1079" y="241" width="1" height="1" fill="#000080"/>
<rect x="1014" y="242" width="1" height="1" fill="#000080"/>
<rect x="1079" y="242" width="1" height="1" fill="#000080"/>
<rect x="1014" y="243" width="1" height="1" fill="#000080"/>
<rect x="1079" y="243" width="1" height="1" fill="#000080"/>
<rect x="1014" y="244" width="1" height="1" fill="#000080"/>
<rect x="1079" y="244" width="1" height="1" fill="#000080"/>
<rect x="1014" y="245" width="1" height="1" fill="#000080"/>
<rect x="1079" y="245" width="1" height="1" fill="#000080"/>
<rect x="1014" y="246" width="1" height="1" fill="#000080"/>
<rect x="1079" y="246" width="1" height="1" fill="#000080"/>
<rect x="1014" y="247" width="1" height="1" fill="#000080"/>
<rect x="1079" y="247" width="1" height="1" fill="#000080"/>
<rect x="1014" y="248" width="1" height="1" fill="#000080"/>
<rect x="1079" y="248" width="1" height="1" fill="#000080"/>
<rect x="1015" y="249" width="1" height="1" fill="#000080"/>
<rect x="1078" y="249" width="1" height="1" fill="#000080"/>
<rect x="1015" y="250" width="1" height="1" fill="#000080"/>
<rect x="1078" y="250" width="1" height="1" fill="#000080"/>
<rect x="1015" y="251" width="1" height="1" fill="#000080"/>
<rect x="1078" y="251" width="1" height="1" fill="#000080"/>
<rect x="1015" y="252" width="1" height="1" fill="#000080"/>
<rect x="1078" y="252" width="1" height="1" fill="#000080"/>
<rect x="1016" y="253" width="1" height="1" fill="#000080"/>
<rect x="1077" y="253" width="1" height="1" fill="#000080"/>
<rect x="1016" y="254" width="1" height="1" fill="#000080"/>
<rect x="1077" y="254" width="1" height="1" fill="#000080"/>
<rect x="1016" y="255" width="1" height="1" fill="#000080"/>
<rect x="1077" y="255" width="1" height="1" fill="#000080"/>
<rect x="1017" y="256" width="1" height="1" fill="#000080"/>
<rect x="1076" y="256" width="1" height="1" fill="#000080"/>
<rect x="1017" y="257" width="1" height="1" fill="#000080"/>
<rect x="1076" y="257" width="1" height="1" fill="#000080"/>
<rect x="1017" y="258" width="1" height="1" fill="#000080"/>
<rect x="1076" y="258" width="1" height="1" fill="#000080"/>
<rect x="1018" y="259" width="1" height="1" fill="#000080"/>
<rect x="1075" y="259" width="1" height="1" fill="#000080"/>
<rect x="1019" y="260" width="1" height="1" fill="#000080"/>
<rect x="1074" y="260" width="1" height="1" fill="#000080"/>
<rect x="1019" y="261" width="1" height="1" fill="#000080"/>
<rect x="1074" y="261" width="1" height="1" fill="#000080"/>
<rect x="1020" y="262" width="1" height="1" fill="#000080"/>
<rect x="1073" y="262" width="1" height="1" fill="#000080"/>
<rect x="1021" y="263" width="1" height="1" fill="#000080"/>
<rect x="1072" y="263" width="1" height="1" fill="#000080"/>
<rect x="1021" y="264" width="1" height="1" fill="#000080"/>
<rect x="1072" y="264" width="1" height="1" fill="#000080"/>
<rect x="1022" y="265" width="1" height="1" fill="#000080"/>
<rect x="1071" y="265" width="1" height="1" fill="#000080"/>
<rect x="1023" y="266" width="1" height="1" fill="#000080"/>
<rect x="1070" y="266" width="1" height="1" fill="#000080"/>
<rect x="1024" y="267" width="1" height="1" fill="#000080"/>
<rect x="1069" y="267" width="1" height="1" fill="#000080"/>
<rect x="1025" y="268" width="1" height="1" fill="#000080"/>
<rect x="1068" y="268" width="1" height="1" fill="#000080"/>
<rect x="1026" y="269" width="1" height="1" fill="#000080"/>
<rect x="1067" y="269" width="1" height="1" fill="#000080"/>
<rect x="1027" y="270" width="1" height="1" fill="#000080"/>
<rect x="1028" y="270" width="1" height="1" fill="#000080"/>
<rect x="1065" y="270" width="1" height="1" fill="#000080"/>
<rect x="1066" y="270" width="1" height="1" fill="#000080"/>
<rect x="1029" y="271" width="1" height="1" fill="#000080"/>
<rect x="1064" y="271" width="1" height="1" fill="#000080"/>
<rect x="1030" y="272" width="1" height="1" fill="#000080"/>
<rect x="1031" y="272" width="1" height="1" fill="#000080"/>
<rect x="1062" y="272" width="1" height="1" fill="#000080"/>
<rect x="1063" y="272" width="1" height="1" fill="#000080"/>
<rect x="1032" y="273" width="1" height="1" fill="#000080"/>
<rect x="1033" y="273" width="1" height="1" fill="#000080"/>
<rect x="1060" y="273" width="1" height="1" fill="#000080"/>
<rect x="1061" y="273" width="1" height="1" fill="#000080"/>
<rect x="1034" y="274" width="1" height="1" fill="#000080"/>
<rect x="1035" y="274" width="1" height="1" fill="#000080"/>
<rect x="1036" y="274" width="1" height="1" fill="#000080"/>
<rect x="1057" y="274" width="1" height="1" fill="#000080"/>
<rect x="1058" y="274" width="1" height="1" fill="#000080"/>
<rect x="1059" y="274" width="1" height="1" fill="#000080"/>
<rect x="1037" y="275" width="1" height="1" fill="#000080"/>
<rect x="1038" y="275" width="1" height="1" fill="#000080"/>
<rect x="1039" y="275" width="1" height="1" fill="#000080"/>
<rect x="1040" y="275" width="1" height="1" fill="#000080"/>
<rect x="1053" y="275" width="1" height="1" fill="#000080"/>
<rect x="1054" y="275" width="1" height="1" fill="#000080"/>
<rect x="1055" y="275" width="1" height="1" fill="#000080"/>
<rect x="1056" y="275" width="1" height="1" fill="#000080"/>
<rect x="1041" y="276" width="1" height="1" fill="#000080"/>
<rect x="1042" y="276" width="1" height="1" fill="#000080"/>
<rect x="1043" y="276" width="1" height="1" fill="#000080"/>
<rect x="1044" y="276" width="1" height="1" fill="#000080"/>
<rect x="1045" y="276" width="1" height="1" fill="#000080"/>
<rect x="1046" y="276" width="1" height="1" fill="#000080"/>
<rect x="1047" y="276" width="1" height="1" fill="#000080"/>
<rect x="1048" y="276" width="1" height="1" fill="#000080"/>
<rect x="1049" y="276" width="1" height="1" fill="#000080"/>
<rect x="1050" y="276" width="1" height="1" fill="#000080"/>
<rect x="1051" y="276" width="1" height="1" fill="#000080"/>
<rect x="1052" y="276" width="1" height="1" fill="#000080"/>
<rect x="1043" y="243" width="22" height="1" fill="#000080"/>
<rect x="1042" y="239" width="2" height="1" fill="#000080"/>
<rect x="1033" y="242" width="3" height="1" fill="#000080"/>
<rect x="1043" y="242" width="1" height="1" fill="#000080"/>
<rect x="1033" y="244" width="3" height="1" fill="#000080"/>
<rect x="1043" y="244" width="1" height="1" fill="#000080"/>
<rect x="1036" y="241" width="3" height="1" fill="#000080"/>
<rect x="1043" y="241" width="1" height="1" fill="#000080"/>
<rect x="1039" y="240" width="3" height="1" fill="#000080"/>
<rect x="1043" y="240" width="1" height="1" fill="#000080"/>
<rect x="1039" y="246" width="3" height="1" fill="#000080"/>
<rect x="1043" y="246" width="1" height="1" fill="#000080"/>
<rect x="1031" y="243" width="2" height="1" fill="#000080"/>
<rect x="1043" y="243" width="1" height="1" fill="#000080"/>
<rect x="1036" y="245" width="3" height="1" fill="#000080"/>
<rect x="1043" y="245" width="1" height="1" fill="#000080"/>
<rect x="1042" y="247" width="2" height="1" fill="#000080"/>
<text x="913" y="185" font-family="Liberation Sans" font-size="20" fill="#000000" font-weight="normal" textLength="210.14" lengthAdjust="spacing" stroke="#c0c0c0" stroke-width="0.15">.ac oct 111 1k 1meg</text>
<text x="753" y="251" font-family="Liberation Sans" font-size="20" fill="#000000" font-weight="normal" textLength="46.94" lengthAdjust="spacing" stroke="#c0c0c0" stroke-width="0.15">out2</text>
<text x="1243" y="251" font-family="Liberation Sans" font-size="20" fill="#000000" font-weight="normal" textLength="46.94" lengthAdjust="spacing" stroke="#c0c0c0" stroke-width="0.15">out1</text>
<text x="815" y="293" font-family="Liberation Sans" font-size="20" fill="#000000" font-weight="normal" textLength="25.58" lengthAdjust="spacing" stroke="#c0c0c0" stroke-width="0.15">C3</text>
<text x="816" y="351" font-family="Liberation Sans" font-size="20" fill="#000000" font-weight="normal" textLength="37.78" lengthAdjust="spacing" stroke="#c0c0c0" stroke-width="0.15">47µ</text>
<text x="825" y="426" font-family="Liberation Sans" font-size="20" fill="#000000" font-weight="normal" textLength="27.58" lengthAdjust="spacing" stroke="#c0c0c0" stroke-width="0.15">R3</text>
<text x="826" y="463" font-family="Liberation Sans" font-size="20" fill="#000000" font-weight="normal" textLength="44.91" lengthAdjust="spacing" stroke="#c0c0c0" stroke-width="0.15">35m</text>
<text x="914" y="293" font-family="Liberation Sans" font-size="20" fill="#000000" font-weight="normal" textLength="26.58" lengthAdjust="spacing" stroke="#c0c0c0" stroke-width="0.15">C4</text>
<text x="915" y="351" font-family="Liberation Sans" font-size="20" fill="#000000" font-weight="normal" textLength="37.78" lengthAdjust="spacing" stroke="#c0c0c0" stroke-width="0.15">47µ</text>
<text x="925" y="426" font-family="Liberation Sans" font-size="20" fill="#000000" font-weight="normal" textLength="28.58" lengthAdjust="spacing" stroke="#c0c0c0" stroke-width="0.15">R4</text>
<text x="927" y="463" font-family="Liberation Sans" font-size="20" fill="#000000" font-weight="normal" textLength="42.91" lengthAdjust="spacing" stroke="#c0c0c0" stroke-width="0.15">35m</text>
<text x="1147" y="293" font-family="Liberation Sans" font-size="20" fill="#000000" font-weight="normal" textLength="25.58" lengthAdjust="spacing" stroke="#c0c0c0" stroke-width="0.15">C1</text>
<text x="1147" y="351" font-family="Liberation Sans" font-size="20" fill="#000000" font-weight="normal" textLength="51.03" lengthAdjust="spacing" stroke="#c0c0c0" stroke-width="0.15">330µ</text>
<text x="1157" y="426" font-family="Liberation Sans" font-size="20" fill="#000000" font-weight="normal" textLength="27.58" lengthAdjust="spacing" stroke="#c0c0c0" stroke-width="0.15">R1</text>
<text x="1158" y="463" font-family="Liberation Sans" font-size="20" fill="#000000" font-weight="normal" textLength="58.03" lengthAdjust="spacing" stroke="#c0c0c0" stroke-width="0.15">220m</text>
<text x="1246" y="293" font-family="Liberation Sans" font-size="20" fill="#000000" font-weight="normal" textLength="25.58" lengthAdjust="spacing" stroke="#c0c0c0" stroke-width="0.15">C2</text>
<text x="1247" y="351" font-family="Liberation Sans" font-size="20" fill="#000000" font-weight="normal" textLength="37.78" lengthAdjust="spacing" stroke="#c0c0c0" stroke-width="0.15">47µ</text>
<text x="1257" y="426" font-family="Liberation Sans" font-size="20" fill="#000000" font-weight="normal" textLength="27.58" lengthAdjust="spacing" stroke="#c0c0c0" stroke-width="0.15">R2</text>
<text x="1258" y="463" font-family="Liberation Sans" font-size="20" fill="#000000" font-weight="normal" textLength="44.91" lengthAdjust="spacing" stroke="#c0c0c0" stroke-width="0.15">35m</text>
<text transform="translate(980,315) rotate(-90)" font-family="Liberation Serif" font-size="20" fill="#000000" textLength="45" lengthAdjust="spacing">AC 1</text>
<text transform="translate(1097,290.5) rotate(-90)" font-family="Liberation Serif" font-size="20" fill="#000000" textLength="20" lengthAdjust="spacing">I1</text>
<text x="790" y="542" font-family="Liberation Sans" font-size="20" fill="#0000d8" font-weight="normal" textLength="520.51" lengthAdjust="spacing" stroke="#c0c0c0" stroke-width="0.15"><tspan font-family="Liberation Serif">I</tspan>mpedanzverlauf von Kondensatoren im Vergleich</text>
</svg></body></html>
